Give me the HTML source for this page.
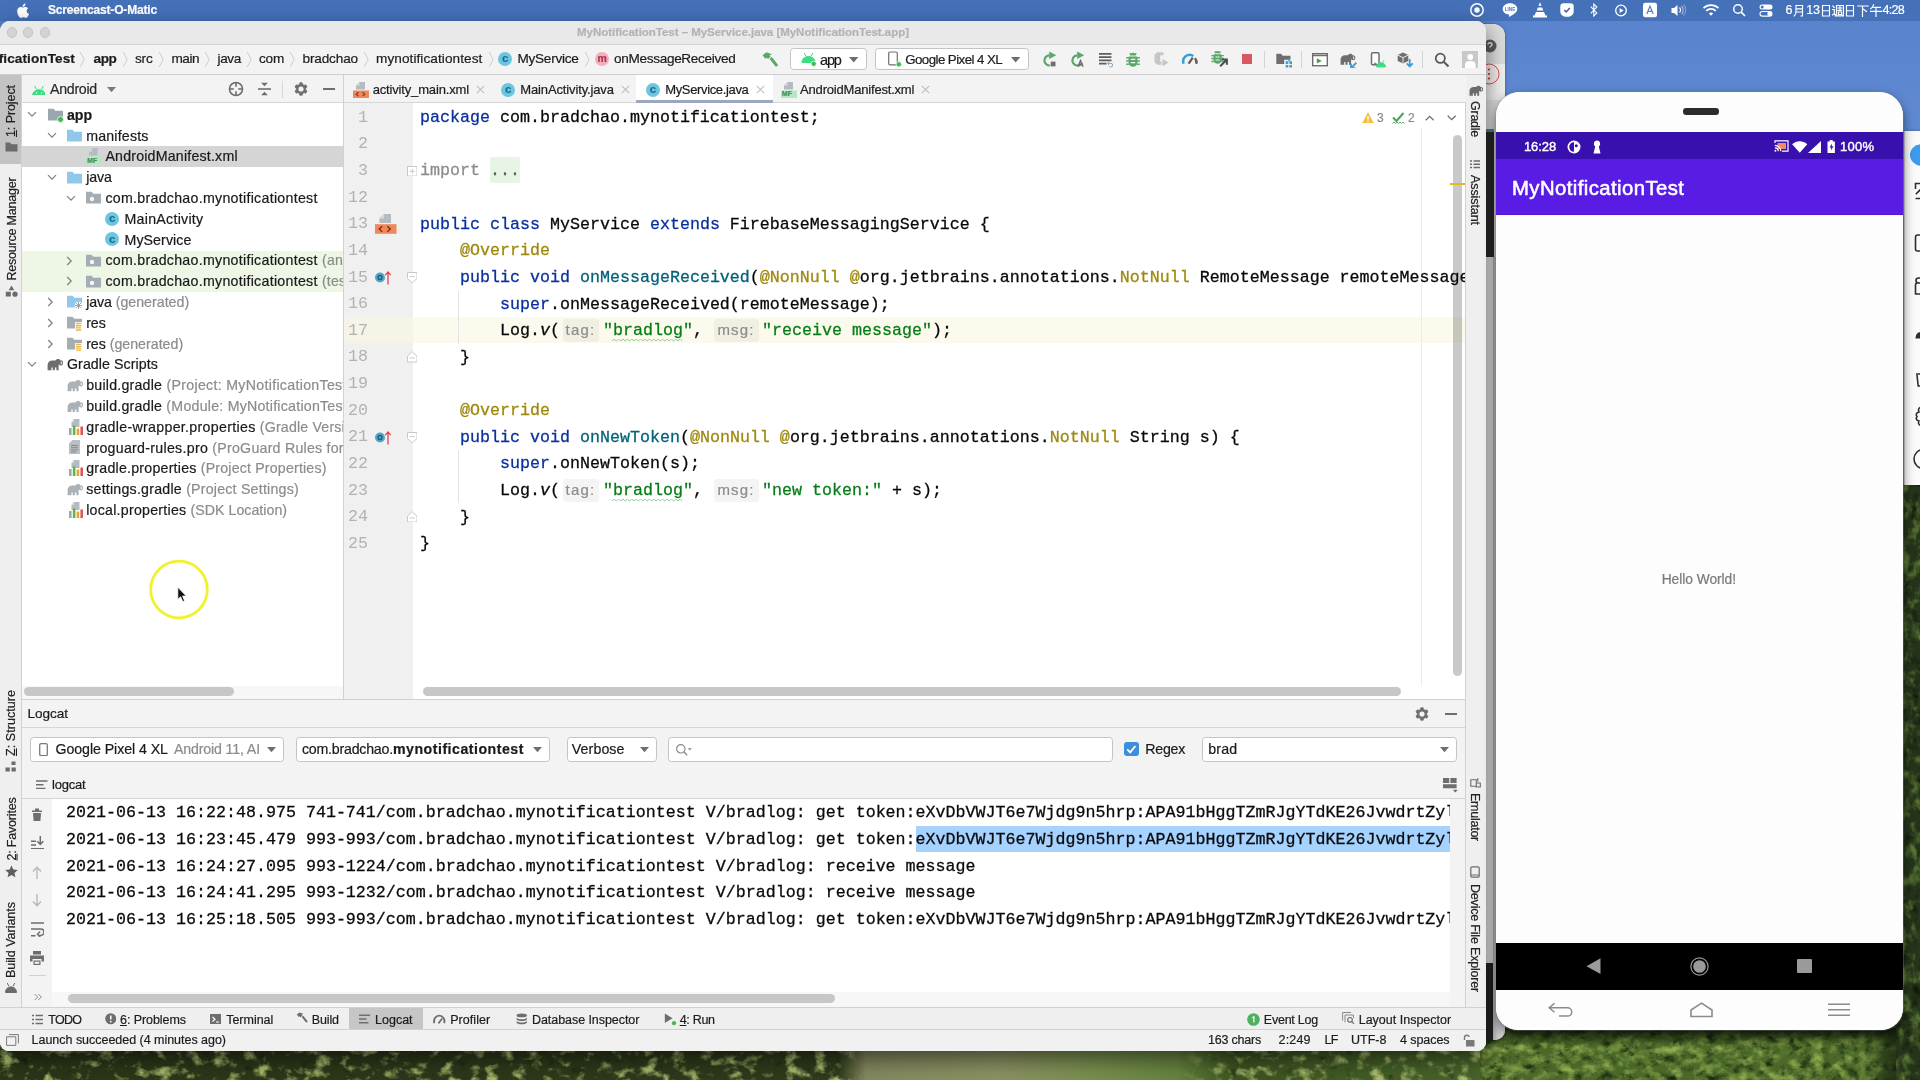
<!DOCTYPE html>
<html><head><meta charset="utf-8"><title>MyNotificationTest</title><style>
html,body{margin:0;padding:0}
body{width:1920px;height:1080px;overflow:hidden;position:relative;background:#5f8ad2;font-family:"Liberation Sans",sans-serif}
div,span,svg{position:absolute;box-sizing:border-box}
.t{white-space:pre;line-height:20px;height:20px}
.s{font-family:"Liberation Sans",sans-serif;-webkit-text-stroke:.2px currentColor}
.m{font-family:"Liberation Mono",monospace;-webkit-text-stroke:.27px currentColor}
.m span{-webkit-text-stroke:.27px currentColor}
#root{left:0;top:0;width:1920px;height:1080px;overflow:hidden;will-change:transform}
</style></head><body>
<div id="root">
<div style="left:0px;top:0px;width:1920px;height:1080px;background:linear-gradient(180deg,#5883cc 0px,#5f8ad2 120px,#668fd4 480px);"></div>
<svg style="left:0;top:0" width="1920" height="1080" viewBox="0 0 1920 1080">
<defs>
<filter id="fol" x="0" y="0" width="100%" height="100%" color-interpolation-filters="sRGB">
<feTurbulence type="fractalNoise" baseFrequency="0.085 0.11" numOctaves="5" seed="11" result="n"/>
<feColorMatrix in="n" type="matrix" values="0 0 0 0 0  0 0 0 0 0  0 0 0 0 0  1.7 1.7 0 0 -1.55" result="a"/>
<feFlood flood-color="#8fad50" result="c"/>
<feComposite in="c" in2="a" operator="in" result="hi"/>
<feColorMatrix in="n" type="matrix" values="0 0 0 0 0  0 0 0 0 0  0 0 0 0 0  0 -2 -2 0 1.9" result="b"/>
<feFlood flood-color="#18260e" result="d"/>
<feComposite in="d" in2="b" operator="in" result="lo"/>
<feMerge><feMergeNode in="SourceGraphic"/><feMergeNode in="lo"/><feMergeNode in="hi"/></feMerge>
</filter>
<filter id="fol3" x="0" y="0" width="100%" height="100%" color-interpolation-filters="sRGB">
<feTurbulence type="fractalNoise" baseFrequency="0.09 0.07" numOctaves="4" seed="23" result="n"/>
<feColorMatrix in="n" type="matrix" values="0 0 0 0 0  0 0 0 0 0  0 0 0 0 0  2 2 0 0 -1.9" result="a"/>
<feFlood flood-color="#62823a" result="c"/>
<feComposite in="c" in2="a" operator="in" result="hi"/>
<feColorMatrix in="n" type="matrix" values="0 0 0 0 0  0 0 0 0 0  0 0 0 0 0  0 -2 -2 0 1.8" result="b"/>
<feFlood flood-color="#10190a" result="d"/>
<feComposite in="d" in2="b" operator="in" result="lo"/>
<feMerge><feMergeNode in="SourceGraphic"/><feMergeNode in="lo"/><feMergeNode in="hi"/></feMerge>
</filter>
<linearGradient id="shd" x1="0" x2="0" y1="0" y2="1"><stop offset="0" stop-color="#101a08" stop-opacity=".85"/><stop offset="1" stop-color="#101a08" stop-opacity="0"/></linearGradient>
<linearGradient id="shr" x1="0" x2="1" y1="0" y2="0"><stop offset="0" stop-color="#141f0c" stop-opacity="0"/><stop offset="1" stop-color="#141f0c" stop-opacity=".9"/></linearGradient>
<filter id="fol2" x="0" y="0" width="100%" height="100%" color-interpolation-filters="sRGB">
<feTurbulence type="fractalNoise" baseFrequency="0.07 0.09" numOctaves="4" seed="5" result="n"/>
<feColorMatrix in="n" type="matrix" values="0 0 0 0 0  0 0 0 0 0  0 0 0 0 0  2.4 2.4 0 0 -2.45" result="a"/>
<feFlood flood-color="#a9bb6c" result="c"/>
<feComposite in="c" in2="a" operator="in" result="hi"/>
<feColorMatrix in="n" type="matrix" values="0 0 0 0 0  0 0 0 0 0  0 0 0 0 0  0 -2 -2 0 1.5" result="b"/>
<feFlood flood-color="#151f0c" result="d"/>
<feComposite in="d" in2="b" operator="in" result="lo"/>
<feMerge><feMergeNode in="SourceGraphic"/><feMergeNode in="lo"/><feMergeNode in="hi"/></feMerge>
</filter>
<linearGradient id="bt" x1="0" x2="1" y1="0" y2="0">
<stop offset="0" stop-color="#2a3618"/><stop offset="0.6" stop-color="#2f3b1c"/><stop offset="0.8" stop-color="#3a5020"/><stop offset="1" stop-color="#48642a"/>
</linearGradient>
<linearGradient id="fld" x1="0" x2="1" y1="0" y2="0">
<stop offset="0" stop-color="#7d8359" stop-opacity="0"/><stop offset="0.07" stop-color="#85895f"/><stop offset="0.4" stop-color="#8b9263"/>
<stop offset="0.62" stop-color="#7a9050"/><stop offset="0.85" stop-color="#66843e"/><stop offset="1" stop-color="#5a7a35" stop-opacity="0"/>
</linearGradient>
</defs>
<rect x="0" y="1044" width="1486" height="36" fill="url(#bt)" filter="url(#fol2)"/>
<rect x="838" y="1044" width="400" height="36" fill="url(#fld)"/>
<rect x="1480" y="1020" width="440" height="60" fill="#4b6829" filter="url(#fol)"/>
<rect x="1480" y="1028" width="440" height="17" fill="url(#shd)"/>
<rect x="1862" y="1020" width="40" height="60" fill="url(#shr)"/>

<rect x="1896" y="484" width="24" height="596" fill="#25341a" filter="url(#fol3)"/>
</svg>
<div style="left:0px;top:0px;width:1920px;height:21px;background:#4571b9;"></div>
<svg style="left:16px;top:2px;" width="15" height="17" viewBox="0 0 15 17"><path fill="#fff" d="M10.6 8.9c0-1.7 1.4-2.5 1.5-2.6-.8-1.2-2.1-1.4-2.5-1.4-1.1-.1-2.1.6-2.6.6-.6 0-1.4-.6-2.3-.6C3.500 4.900 2.400 5.600 1.800 6.700.5 8.900 1.500 12.200 2.700 14c.6.9 1.300 1.900 2.300 1.800.9 0 1.300-.6 2.400-.6s1.400.6 2.400.6 1.600-.9 2.200-1.800c.7-1 1-2 1-2.100-.1 0-2.400-.9-2.400-3zM8.800 3.700c.5-.6.800-1.400.700-2.300-.7 0-1.600.5-2.100 1.100-.5.500-.9 1.400-.8 2.200.8.100 1.700-.4 2.200-1z"/></svg>
<span class="t s" style="left:48px;top:0.30px;font-size:12px;color:#fff;letter-spacing:-0.169px;font-weight:700;">Screencast-O-Matic</span>
<svg style="left:1468.2px;top:1.3000000000000007px;" width="18" height="18" viewBox="0 0 18 18"><circle cx="9" cy="9" r="6.2" fill="none" stroke="#fff" stroke-width="1.5"/><circle cx="9" cy="9" r="2.7" fill="#fff"/></svg>
<svg style="left:1500.8px;top:1.3000000000000007px;" width="18" height="18" viewBox="0 0 18 18"><path fill="#fff" d="M9 2.300c-4.100 0-7.300 2.500-7.300 5.700 0 2.800 2.500 5.100 5.900 5.600.5.100.6.300.5.800l-.1 1c0 .3.200.5.600.300 1.500-.8 5.300-3.100 6.600-4.700.7-.9 1.100-1.900 1.100-3 0-3.200-3.200-5.700-7.300-5.700z"/><text x="9" y="9.800" text-anchor="middle" font-family="Liberation Sans" font-weight="700" font-size="4.600" fill="#4c76bd">LINE</text></svg>
<svg style="left:1531.3px;top:1.3000000000000007px;" width="18" height="18" viewBox="0 0 18 18"><path fill="#fff" d="M9 1.200l1.500 3.600h-3zM6.900 6.400h4.200l1.200 3h-6.600zM5 11h8l1.500 3.500h1.500v2h-14v-2h1.500z"/></svg>
<svg style="left:1558.3px;top:1.3000000000000007px;" width="18" height="18" viewBox="0 0 18 18"><path fill="#fff" d="M5.500 2.300h7c2 0 3.200 1.200 3.200 3.200v5c0 3-2.500 5.300-6.700 5.300s-6.700-2.300-6.700-5.300v-5c0-2 1.200-3.200 3.200-3.200z"/><path d="M6.300 9l1.900 1.900 3.600-3.800" stroke="#3c5f9e" stroke-width="1.500" fill="none"/></svg>
<svg style="left:1584.7px;top:1.3000000000000007px;" width="18" height="18" viewBox="0 0 18 18"><path fill="none" stroke="#fff" stroke-width="1.100" d="M5.800 5.600l6 6.300-3 3v-11.800l3 3-6 6.300"/></svg>
<svg style="left:1611.5px;top:1.3000000000000007px;" width="18" height="18" viewBox="0 0 18 18"><circle cx="9" cy="9.500" r="5.300" fill="none" stroke="#fff" stroke-width="1.300"/><path fill="#fff" d="M7.600 7l4 2.500-4 2.500z"/></svg>
<svg style="left:1641.0px;top:1.3000000000000007px;" width="18" height="18" viewBox="0 0 18 18"><rect x="2" y="1.800" width="14" height="14.400" rx="2.200" fill="#fff"/><path d="M5.800 13l3.200-8 3.200 8M6.900 10.300h4.200" stroke="#5f7fb8" stroke-width="1.200" fill="none"/></svg>
<svg style="left:1670.4px;top:1.3000000000000007px;" width="20" height="18" viewBox="0 0 20 18"><path fill="#fff" d="M1.500 7h2.500l3.500-3v11l-3.500-3h-2.500z"/><path d="M9.500 6.500c1.300 1.300 1.300 3.700 0 5" stroke="#fff" stroke-width="1.100" fill="none"/><path d="M11.500 4.800c2.200 2.200 2.200 6.200 0 8.400" stroke="#fff" stroke-width="1.100" fill="none" opacity=".55"/><path d="M13.500 3.300c3 3 3 8.400 0 11.400" stroke="#fff" stroke-width="1.100" fill="none" opacity=".35"/></svg>
<svg style="left:1701.8px;top:1.3000000000000007px;" width="18" height="18" viewBox="0 0 18 18"><path d="M1.500 7.200c4.200-4 10.800-4 15 0" stroke="#fff" stroke-width="1.700" fill="none"/><path d="M4.200 9.900c2.700-2.600 6.900-2.600 9.600 0" stroke="#fff" stroke-width="1.700" fill="none"/><path d="M6.800 12.400c1.300-1.200 3.100-1.200 4.400 0l-2.200 2.300z" fill="#fff"/></svg>
<svg style="left:1729.6px;top:1.3000000000000007px;" width="18" height="18" viewBox="0 0 18 18"><circle cx="8" cy="8" r="4.300" fill="none" stroke="#fff" stroke-width="1.500"/><path d="M11.200 11.200l3.800 3.800" stroke="#fff" stroke-width="1.700"/></svg>
<svg style="left:1757.0px;top:1.3000000000000007px;" width="18" height="18" viewBox="0 0 18 18"><rect x="2.500" y="3.500" width="13" height="5" rx="2.500" fill="#fff"/><circle cx="5.200" cy="6" r="1.500" fill="#4571b9"/><rect x="3" y="10.500" width="12" height="4.600" rx="2.300" fill="none" stroke="#fff" stroke-width="1.100"/><circle cx="12.600" cy="12.800" r="2.300" fill="#fff"/></svg>
<span class="t s" style="left:1785.6px;top:0.40px;font-size:12.5px;color:#fff;">6</span>
<svg style="left:1792.6px;top:3.6px;" width="12" height="13" viewBox="0 0 12 13"><path stroke="#fff" stroke-width="1.150" fill="none" stroke-linecap="square" d="M3 1.500h6.500v10.500h-1.500M3 1.500v6c0 2-.5 3.500-1.800 4.500M3 4.800h6.500M3 8h6.500"/></svg>
<span class="t s" style="left:1806.3px;top:0.40px;font-size:12.5px;color:#fff;letter-spacing:-0.202px;">13</span>
<svg style="left:1819.6px;top:3.6px;" width="12" height="13" viewBox="0 0 12 13"><path stroke="#fff" stroke-width="1.150" fill="none" stroke-linecap="square" d="M2.500 1.500h7v10.500h-7zM2.500 6.700h7"/></svg>
<svg style="left:1832.4px;top:3.6px;" width="12" height="13" viewBox="0 0 12 13"><path stroke="#fff" stroke-width="1.150" fill="none" stroke-linecap="square" d="M4.500 1.500h7v10h-1.500M4.500 1.500v7c0 1.500-.3 2.500-1 3.500M6 4h4M8 2.500v4M6 6.300h4M6.300 8h3.400v2.500h-3.400zM.800 2l1.500 1.500M.500 5.500h1.800v4l-1.800 1.500M2 10l2 1.800h7.800"/></svg>
<svg style="left:1844px;top:3.6px;" width="12" height="13" viewBox="0 0 12 13"><path stroke="#fff" stroke-width="1.150" fill="none" stroke-linecap="square" d="M2.500 1.500h7v10.500h-7zM2.500 6.700h7"/></svg>
<svg style="left:1857.4px;top:3.6px;" width="12" height="13" viewBox="0 0 12 13"><path stroke="#fff" stroke-width="1.150" fill="none" stroke-linecap="square" d="M.800 2h10.400M5.500 2v10.300M6 5l3.500 2.500"/></svg>
<svg style="left:1869.6px;top:3.6px;" width="12" height="13" viewBox="0 0 12 13"><path stroke="#fff" stroke-width="1.150" fill="none" stroke-linecap="square" d="M3.500.800c-.5 1.800-1.500 3-2.800 4M2.800 3.300h7.700M.500 7.300h11M6 3.300v9"/></svg>
<span class="t s" style="left:1882.4px;top:0.40px;font-size:12.5px;color:#fff;letter-spacing:-0.632px;">4:28</span>
<div style="left:1440px;top:24px;width:65px;height:1016px;background:#e3e3e3;overflow:hidden;border-radius:0 12px 10px 0;box-shadow:0 0 3px rgba(0,0,0,.35);">
<div style="left:0px;top:0px;width:65px;height:40px;background:#dcdcdc;"></div>
<div style="left:0px;top:40px;width:65px;height:36px;background:#f1f1f1;"></div>
<div style="left:46px;top:108px;width:7.5px;height:125px;background:#2a2a2c;"></div>
<div style="left:46px;top:105px;width:7.5px;height:3px;background:#4a8a96;"></div>
<div style="left:46px;top:939px;width:6.5px;height:77px;background:#242424;"></div>
<div style="left:53px;top:233px;width:12px;height:783px;background:linear-gradient(90deg,#bdbdbd,#d8d8d8 40%,#e6e6e6);"></div>
<svg style="left:40px;top:12px;" width="20" height="20" viewBox="0 0 20 20"><circle cx="10" cy="10" r="6.500" fill="#5a5a5a"/><path d="M8 8.500c0-2.500 4-2.500 4 0 0 1.500-2 1.500-2 3" stroke="#e0e0e0" stroke-width="1.500" fill="none"/></svg>
<svg style="left:34px;top:36px;" width="30" height="30" viewBox="0 0 30 30"><circle cx="15" cy="14" r="10" fill="#f6eded" stroke="#d9534f" stroke-width="1"/><circle cx="15" cy="9.500" r="1.100" fill="#c0392b"/><circle cx="15" cy="14" r="1.100" fill="#c0392b"/><circle cx="15" cy="18.500" r="1.100" fill="#c0392b"/></svg>
</div>
<div style="left:0px;top:21px;width:1486px;height:1030px;background:#ececec;border-radius:10px 10px 9px 9px;box-shadow:0 8px 22px rgba(0,0,0,.55);"></div>
<div style="left:0px;top:21px;width:1486px;height:1030px;background:#f2f2f2;overflow:hidden;border-radius:10px 10px 9px 9px;">
<div style="left:0px;top:0px;width:1486px;height:23.5px;background:#e9e9e9;"></div>
<div style="left:0px;top:23px;width:1486px;height:1px;background:#d2d2d2;"></div>
<div style="left:6.499999999999999px;top:6.199999999999999px;width:10.4px;height:10.4px;background:#d3d3d3;border-radius:50%;border:.5px solid #c4c4c4;"></div>
<div style="left:23.0px;top:6.199999999999999px;width:10.4px;height:10.4px;background:#d3d3d3;border-radius:50%;border:.5px solid #c4c4c4;"></div>
<div style="left:39.8px;top:6.199999999999999px;width:10.4px;height:10.4px;background:#d3d3d3;border-radius:50%;border:.5px solid #c4c4c4;"></div>
<span class="t s" style="left:577px;top:1.20px;font-size:11.5px;color:#b3b3b3;letter-spacing:-0.030px;font-weight:700;">MyNotificationTest – MyService.java [MyNotificationTest.app]</span>
<div style="left:0px;top:24px;width:1486px;height:29.5px;background:#f3f3f3;"></div>
<div style="left:0px;top:53px;width:1486px;height:1px;background:#cfcfcf;"></div>
<span class="t s" style="left:-47px;top:28.20px;font-size:13.6px;color:#1c1c1c;letter-spacing:0.075px;font-weight:700;">MyNotificationTest</span>
<span class="t s" style="left:93.5px;top:28.20px;font-size:13.6px;color:#1c1c1c;letter-spacing:-0.393px;font-weight:700;">app</span>
<span class="t s" style="left:135px;top:28.20px;font-size:13.6px;color:#1c1c1c;letter-spacing:-0.210px;">src</span>
<span class="t s" style="left:171.5px;top:28.20px;font-size:13.6px;color:#1c1c1c;letter-spacing:-0.495px;">main</span>
<span class="t s" style="left:217.5px;top:28.20px;font-size:13.6px;color:#1c1c1c;letter-spacing:-0.362px;">java</span>
<span class="t s" style="left:259px;top:28.20px;font-size:13.6px;color:#1c1c1c;letter-spacing:-0.231px;">com</span>
<span class="t s" style="left:302.5px;top:28.20px;font-size:13.6px;color:#1c1c1c;letter-spacing:-0.152px;">bradchao</span>
<span class="t s" style="left:376px;top:28.20px;font-size:13.6px;color:#1c1c1c;letter-spacing:0.079px;">mynotificationtest</span>
<span class="t s" style="left:517.5px;top:28.20px;font-size:13.6px;color:#1c1c1c;letter-spacing:-0.276px;">MyService</span>
<span class="t s" style="left:614px;top:28.20px;font-size:13.6px;color:#1c1c1c;letter-spacing:-0.324px;">onMessageReceived</span>
<svg style="left:79.0px;top:29.700000000000003px;" width="7" height="17" viewBox="0 0 7 17"><path d="M1.200 1l4 7.500-4 7.500" stroke="#cdcdcd" stroke-width="1" fill="none"/></svg>
<svg style="left:121.5px;top:29.700000000000003px;" width="7" height="17" viewBox="0 0 7 17"><path d="M1.200 1l4 7.500-4 7.500" stroke="#cdcdcd" stroke-width="1" fill="none"/></svg>
<svg style="left:158.0px;top:29.700000000000003px;" width="7" height="17" viewBox="0 0 7 17"><path d="M1.200 1l4 7.500-4 7.500" stroke="#cdcdcd" stroke-width="1" fill="none"/></svg>
<svg style="left:204.0px;top:29.700000000000003px;" width="7" height="17" viewBox="0 0 7 17"><path d="M1.200 1l4 7.500-4 7.500" stroke="#cdcdcd" stroke-width="1" fill="none"/></svg>
<svg style="left:245.5px;top:29.700000000000003px;" width="7" height="17" viewBox="0 0 7 17"><path d="M1.200 1l4 7.500-4 7.500" stroke="#cdcdcd" stroke-width="1" fill="none"/></svg>
<svg style="left:289.0px;top:29.700000000000003px;" width="7" height="17" viewBox="0 0 7 17"><path d="M1.200 1l4 7.500-4 7.500" stroke="#cdcdcd" stroke-width="1" fill="none"/></svg>
<svg style="left:363.0px;top:29.700000000000003px;" width="7" height="17" viewBox="0 0 7 17"><path d="M1.200 1l4 7.500-4 7.500" stroke="#cdcdcd" stroke-width="1" fill="none"/></svg>
<svg style="left:487.5px;top:29.700000000000003px;" width="7" height="17" viewBox="0 0 7 17"><path d="M1.200 1l4 7.500-4 7.500" stroke="#cdcdcd" stroke-width="1" fill="none"/></svg>
<svg style="left:584.0px;top:29.700000000000003px;" width="7" height="17" viewBox="0 0 7 17"><path d="M1.200 1l4 7.500-4 7.500" stroke="#cdcdcd" stroke-width="1" fill="none"/></svg>
<div style="left:498.10px;top:31.00px;width:14.4px;height:14.4px;border-radius:50%;background:#6cc6e2;"></div>
<span class="t s" style="left:498.10px;top:27.30px;width:14.4px;text-align:center;font-size:11.5px;font-weight:700;color:#1f6f8f;">c</span>
<div style="left:595.10px;top:31.00px;width:14.4px;height:14.4px;border-radius:50%;background:#f6afba;"></div>
<span class="t s" style="left:595.10px;top:27.30px;width:14.4px;text-align:center;font-size:10.5px;font-weight:700;color:#a13a4e;">m</span>
<svg style="left:759.5px;top:29.5px;" width="18.5" height="17.5" viewBox="0 0 16 14"><path fill="#59a869" d="M2.200 3.200l3.400-2.600 4.600 1.600-2 1.100 1 1.200-2.300 1.900-1-1.200-1.300 1zM8.300 6.300l1.900-1.600 5.200 6.500c.5.700-1.200 2.200-1.900 1.600z"/></svg>
<div style="left:789.6px;top:27px;width:77.7px;height:22px;background:#ffffff;border:1px solid #c4c4c4;border-radius:3.500px;"></div>
<svg style="left:800.5px;top:31px;" width="16" height="15" viewBox="0 0 16 15"><path d="M1 10.500c0-3.600 2.700-6 6.500-6s6.500 2.400 6.500 6zM3.200 1l1.700 3M11.800 1l-1.700 3" fill="#3ddc84" stroke="#3ddc84" stroke-width="1"/><circle cx="12.700" cy="11.800" r="2.600" fill="#3fb950" stroke="#fff" stroke-width=".8"/></svg>
<span class="t s" style="left:820px;top:28.80px;font-size:14.5px;color:#1c1c1c;letter-spacing:-1.131px;">app</span>
<svg style="left:848.5px;top:35.5px;" width="10" height="6" viewBox="0 0 10 6"><path d="M0 0h9.400l-4.700 5.400z" fill="#6e6e6e"/></svg>
<div style="left:874.6px;top:27px;width:154.7px;height:22px;background:#ffffff;border:1px solid #c4c4c4;border-radius:3.500px;"></div>
<svg style="left:886.5px;top:30px;" width="16" height="17" viewBox="0 0 16 17"><rect x="1.700" y="1" width="8.600" height="12.800" rx="1.300" stroke="#6e6e6e" stroke-width="1.200" fill="#fff"/><circle cx="11.800" cy="13.300" r="2.700" fill="#3fb950" stroke="#fff" stroke-width=".8"/></svg>
<span class="t s" style="left:905.2px;top:28.80px;font-size:13.3px;color:#1c1c1c;letter-spacing:-0.557px;">Google Pixel 4 XL</span>
<svg style="left:1010.8px;top:35.5px;" width="10" height="6" viewBox="0 0 10 6"><path d="M0 0h9.400l-4.700 5.400z" fill="#6e6e6e"/></svg>
<svg style="left:1039.8px;top:28.700000000000003px;" width="18" height="18" viewBox="0 0 18 18"><path d="M9.300 5.300a5.100 5.100 0 1 0 4.700 7.600" stroke="#59a869" stroke-width="2.200" fill="none"/><path d="M9.200 1.500l7 3.800-7 3.800z" fill="#59a869"/><rect x="10.300" y="11.200" width="5.600" height="5.600" fill="#6e6e6e" stroke="#f3f3f3" stroke-width=".7"/></svg>
<svg style="left:1067.6px;top:28.700000000000003px;" width="18" height="18" viewBox="0 0 18 18"><path d="M9.300 5.300a5.100 5.100 0 1 0 4.700 7.600" stroke="#59a869" stroke-width="2.200" fill="none"/><path d="M9.200 1.500l7 3.800-7 3.800z" fill="#59a869"/><path d="M9.800 16.800l2.700-6.300 2.700 6.300M10.800 14.800h3.400" stroke="#6e6e6e" stroke-width="1.300" fill="none"/></svg>
<svg style="left:1096.7px;top:28.700000000000003px;" width="18" height="18" viewBox="0 0 18 18"><path d="M2 3.800h12.500M2 7.100h12.500M2 10.400h12.500M2 13.700h7.500" stroke="#5e5e5e" stroke-width="1.800"/><path d="M12 11.800l-1.500 1.600 1.500 1.600M10.700 13.400h3.300a1.700 1.700 0 0 1 0 3.400h-1.500" stroke="#8aa0b3" stroke-width="1" fill="none"/></svg>
<svg style="left:1123.7px;top:28.700000000000003px;" width="18" height="18" viewBox="0 0 18 18"><g transform="translate(9 10) scale(1.0)"><path d="M-2.600-4.600a2.600 2.600 0 0 1 5.200 0z" fill="#59a869"/><path d="M-3.600-3.600h7.200c.6 0 .9.400.9 1v5.200c0 2.600-2 4.200-4.500 4.200s-4.500-1.600-4.500-4.200v-5.200c0-.6.300-1 .9-1z" fill="#59a869"/><path d="M-3.200-6.800l1.500 1.900M3.200-6.800l-1.500 1.900M-6.800-2.200h2.600M-6.800 1h2.600M-6.800 4.200h2.600M6.800-2.200h-2.600M6.800 1h-2.600M6.800 4.200h-2.600" stroke="#59a869" stroke-width="1.500"/><path d="M-2.200-.6h4.400M-2.200 2.600h4.400" stroke="#f3f3f3" stroke-width="1.100"/></g></svg>
<svg style="left:1152.2px;top:28.700000000000003px;" width="18" height="18" viewBox="0 0 18 18"><path d="M5.200 2.200h6.300v3h-3.300v6.600h3.300v3h-6.300l-2.700-2.500v-7.600z" fill="#c6c6c6"/><path d="M10 8.200l7.300 4.400-7.300 4.400z" fill="#c6c6c6" stroke="#f3f3f3" stroke-width=".9"/></svg>
<svg style="left:1180.6px;top:28.700000000000003px;" width="18" height="18" viewBox="0 0 18 18"><path fill="none" stroke="#389fd6" stroke-width="2.500" d="M2.700 13.800a6.400 6.400 0 0 1 9.600-7.700"/><path fill="none" stroke="#5e5e5e" stroke-width="2.500" d="M14 8.300a6.400 6.400 0 0 1 1.300 5.500"/><path d="M7.600 13.600l4.200-6" stroke="#5e5e5e" stroke-width="2.300"/></svg>
<svg style="left:1209.9px;top:28.200000000000003px;" width="19" height="19" viewBox="0 0 19 19"><g transform="translate(7.6 8.6) scale(0.92)"><path d="M-2.600-4.600a2.600 2.600 0 0 1 5.200 0z" fill="#59a869"/><path d="M-3.600-3.600h7.200c.6 0 .9.400.9 1v5.200c0 2.600-2 4.200-4.500 4.200s-4.500-1.600-4.500-4.200v-5.200c0-.6.300-1 .9-1z" fill="#59a869"/><path d="M-3.200-6.800l1.500 1.900M3.200-6.800l-1.500 1.900M-6.800-2.200h2.600M-6.800 1h2.600M-6.800 4.200h2.600M6.800-2.200h-2.600M6.800 1h-2.600M6.800 4.200h-2.600" stroke="#59a869" stroke-width="1.500"/><path d="M-2.200-.6h4.400M-2.200 2.600h4.400" stroke="#f3f3f3" stroke-width="1.100"/></g><path d="M10.200 17.300l6-6M11.700 10.600h5.200v5.200" stroke="#4d4d4d" stroke-width="2" fill="none"/></svg>
<div style="left:1241.5px;top:32.8px;width:10.7px;height:10.2px;background:#db5860;"></div>
<div style="left:1264.2px;top:30px;width:1px;height:17px;background:#d3d3d3;"></div>
<svg style="left:1275.5px;top:30.5px;" width="17" height="16" viewBox="0 0 17 16"><path d="M.3 1.800h4.700l1.700 2h7.800v4h-6.300v4.200h-7.900z" fill="#6e6e6e"/><path d="M9.700 9.300h2.600v2.600h-2.600zM13.400 9.300h2.600v2.600h-2.600zM9.700 13h2.600v2.600h-2.600zM13.400 13h2.600v2.600h-2.600z" fill="#389fd6"/><path d="M12.300 6.500h1.500v3h-1.500z" fill="#389fd6"/></svg>
<div style="left:1301px;top:30px;width:1px;height:17px;background:#d3d3d3;"></div>
<svg style="left:1312px;top:32px;" width="16" height="13.5" viewBox="0 0 16 13.5"><rect x=".7" y=".7" width="14.600" height="12" fill="#fff" stroke="#6e6e6e" stroke-width="1.400"/><path d="M.7 2.500h14.600" stroke="#6e6e6e" stroke-width="1.600"/><path d="M4.800 5.200l5 2.700-5 2.700z" fill="#499c54"/></svg>
<svg style="left:1340px;top:31.5px;" width="18" height="15.5" viewBox="0 0 16.500 14.200"><g transform="scale(.875 1)"><path fill="#6e6e6e" d="M.6 10.800V6.200C.6 3.500 2.600 2.100 5.400 2.100H8.300C9.100 1 10.500.5 11.900.9c1.500.5 2.200 1.900 1.900 3.300l-.4 1.700h-1.800v4.900h-2.200v-2.500h-1.500v2.500h-2.200v-2.500h-1.300v2.500z"/><path d="M12.600 5.300c.9 1.300 2.900.7 2.900-1 0-1.300-1.100-2-1.900-1.500" stroke="#6e6e6e" stroke-width="1.150" fill="none"/></g><path d="M13.200 7.300l-4.600 4.700M8.300 8.200v4.200h4.200" stroke="#389fd6" stroke-width="1.700" fill="none" transform="translate(1.800,1.600)"/></svg>
<svg style="left:1369.5px;top:31px;" width="16" height="16" viewBox="0 0 16 16"><rect x="1.500" y=".8" width="7.500" height="12" rx="1.200" stroke="#6e6e6e" stroke-width="1.500" fill="#fff"/><path d="M4 11.300h2.500" stroke="#6e6e6e" stroke-width="1"/><path d="M6.500 15c0-2.700 1.900-4.300 4.500-4.300s4.500 1.600 4.500 4.300zM8 8.300l1.300 2.200M14 8.300l-1.300 2.200" fill="#3ddc84" stroke="#3ddc84" stroke-width=".9"/></svg>
<svg style="left:1396.5px;top:31px;" width="17" height="16" viewBox="0 0 17 16"><path d="M6 .6l5.300 2.500v5.800l-5.300 2.600-5.300-2.600v-5.800z" fill="#6e6e6e"/><path d="M.7 3.100l5.300 2.500 5.300-2.500M6 5.600v5.900" stroke="#f3f3f3" stroke-width=".9" fill="none"/><path d="M12.700 7v7M9.700 11.300l3 3.200 3-3.200" stroke="#389fd6" stroke-width="1.800" fill="none"/></svg>
<div style="left:1422px;top:30px;width:1px;height:17px;background:#d3d3d3;"></div>
<svg style="left:1434px;top:31px;" width="16" height="16" viewBox="0 0 16 16"><circle cx="6.300" cy="6.300" r="4.600" stroke="#595959" stroke-width="1.800" fill="none"/><path d="M9.700 9.700l4.800 4.800" stroke="#595959" stroke-width="2.100"/></svg>
<svg style="left:1461.7px;top:30px;" width="16.5" height="17" viewBox="0 0 16.5 17"><rect width="16.500" height="17" fill="#c8c8c8"/><circle cx="8.250" cy="6" r="2.900" fill="#fff"/><path d="M3 17v-3.800c0-2.200 2-3.200 5.250-3.200s5.250 1 5.250 3.200v3.800z" fill="#fff"/></svg>
<div style="left:0px;top:54px;width:21px;height:932px;background:#efefef;"></div>
<div style="left:21px;top:54px;width:1px;height:932px;background:#d1d1d1;"></div>
<div style="left:0px;top:54px;width:21px;height:89px;background:#c3c3c3;"></div>
<span class="t s" style="left:-14.80px;top:80.00px;width:52.00px;font-size:12.5px;color:#222;letter-spacing:-0.080px;transform:rotate(-90deg);transform-origin:50% 50%;"><u>1</u>: Project</span>
<svg style="left:4.5px;top:119.5px;" width="13" height="11" viewBox="0 0 13 11"><path d="M.5 1.500h4.500l1.500 1.800h6v7.200h-12z" fill="#6b6b6b"/></svg>
<span class="t s" style="left:-40.30px;top:197.50px;width:103.00px;font-size:12.5px;color:#222;letter-spacing:-0.207px;transform:rotate(-90deg);transform-origin:50% 50%;">Resource Manager</span>
<svg style="left:4.5px;top:264px;" width="13" height="12" viewBox="0 0 13 12"><path d="M6.500.5l2.800 4.800h-5.600zM.8 6.800h5v4.700h-5z" fill="#6b6b6b"/><circle cx="10" cy="9.200" r="2.600" fill="#6b6b6b"/></svg>
<span class="t s" style="left:-21.80px;top:692.00px;width:66.00px;font-size:12.5px;color:#222;letter-spacing:0.059px;transform:rotate(-90deg);transform-origin:50% 50%;"><u>Z</u>: Structure</span>
<svg style="left:5px;top:739.5px;" width="12" height="11" viewBox="0 0 12 11"><path d="M6.500.5h4v3.600h-4zM.5 6.500h4.300v4h-4.300zM6.500 6.500h4.300v4h-4.300z" fill="#6b6b6b"/></svg>
<span class="t s" style="left:-20.30px;top:797.50px;width:63.00px;font-size:12.5px;color:#222;letter-spacing:-0.192px;transform:rotate(-90deg);transform-origin:50% 50%;"><u>2</u>: Favorites</span>
<svg style="left:4.5px;top:843.5px;" width="13" height="13" viewBox="0 0 13 13"><path d="M6.500.5l1.850 4.100 4.400.45-3.300 2.950.95 4.300-3.900-2.250-3.900 2.250.95-4.300-3.300-2.950 4.400-.45z" fill="#5e5e5e"/></svg>
<span class="t s" style="left:-26.80px;top:909.00px;width:76.00px;font-size:12.5px;color:#222;letter-spacing:-0.014px;transform:rotate(-90deg);transform-origin:50% 50%;">Build Variants</span>
<svg style="left:5px;top:961px;" width="12" height="11" viewBox="0 0 12 11"><path d="M.5 10.500c0-3.500 2.300-5.600 5.500-5.600s5.500 2.100 5.500 5.600zM2.200 1l1.700 3.200M9.800 1l-1.700 3.200" fill="#6b6b6b" stroke="#6b6b6b" stroke-width="1"/></svg>
<div style="left:1465.5px;top:54px;width:20.5px;height:932px;background:#efefef;"></div>
<div style="left:1465px;top:54px;width:1px;height:932px;background:#d1d1d1;"></div>
<svg style="left:1468.5px;top:63.5px;" width="14" height="11" viewBox="0 0 14 11"><g transform="scale(.875 1)"><path fill="#6b6b6b" d="M.6 10.800V6.200C.6 3.500 2.600 2.100 5.400 2.100H8.300C9.100 1 10.500.5 11.900.9c1.500.5 2.200 1.900 1.900 3.300l-.4 1.700h-1.800v4.900h-2.200v-2.500h-1.500v2.500h-2.200v-2.500h-1.300v2.500z"/><path d="M12.600 5.300c.9 1.300 2.900.7 2.900-1 0-1.300-1.100-2-1.900-1.500" stroke="#6b6b6b" stroke-width="1.150" fill="none"/></g></svg>
<span class="t s" style="left:1456.80px;top:88.00px;width:36.00px;font-size:12.5px;color:#222;letter-spacing:-0.253px;transform:rotate(90deg);transform-origin:50% 50%;">Gradle</span>
<svg style="left:1469.5px;top:138.5px;" width="10" height="9" viewBox="0 0 10 9"><path d="M0 1h2M3.500 1h6.500M0 4.300h2M3.500 4.300h6.500M0 7.600h2M3.500 7.600h6.500" stroke="#6b6b6b" stroke-width="1.500"/></svg>
<span class="t s" style="left:1449.80px;top:169.00px;width:50.00px;font-size:12.5px;color:#222;letter-spacing:-0.079px;transform:rotate(90deg);transform-origin:50% 50%;">Assistant</span>
<svg style="left:1469.5px;top:755.5px;" width="11" height="11" viewBox="0 0 11 11"><path d="M.8 2.800h5.500v6.400h-5.500zM7.800 1v3.500M6.300 6h4v4h-4z" stroke="#6b6b6b" stroke-width="1.100" fill="none"/></svg>
<span class="t s" style="left:1450.80px;top:785.50px;width:48.00px;font-size:12.5px;color:#222;letter-spacing:-0.253px;transform:rotate(90deg);transform-origin:50% 50%;">Emulator</span>
<svg style="left:1470px;top:845px;" width="10" height="12" viewBox="0 0 10 12"><rect x=".8" y=".8" width="8.400" height="10.400" rx="1.300" stroke="#6b6b6b" stroke-width="1.200" fill="none"/><path d="M1 9h8" stroke="#6b6b6b" stroke-width="1"/></svg>
<span class="t s" style="left:1420.80px;top:906.50px;width:108.00px;font-size:12.5px;color:#222;letter-spacing:-0.192px;transform:rotate(90deg);transform-origin:50% 50%;">Device File Explorer</span>
<div style="left:0px;top:986px;width:1486px;height:1px;background:#d1d1d1;"></div>
<div style="left:0px;top:987px;width:1486px;height:20.5px;background:#efefef;"></div>
<div style="left:348.8px;top:987px;width:73.8px;height:20.5px;background:#c6c6c6;"></div>
<svg style="left:32px;top:992.5px;" width="11" height="11" viewBox="0 0 11 11"><path d="M0 1.500h2M3.500 1.500h7.500M0 5.500h2M3.500 5.500h7.500M0 9.500h2M3.500 9.500h7.500" stroke="#6e6e6e" stroke-width="1.500"/></svg>
<span class="t s" style="left:48.2px;top:988.60px;font-size:12.5px;color:#1c1c1c;letter-spacing:-0.721px;">TODO</span>
<svg style="left:104.5px;top:992px;" width="11.5" height="11.5" viewBox="0 0 11.5 11.5"><circle cx="5.750" cy="5.750" r="5.500" fill="#6e6e6e"/><path d="M5.750 2.500v4" stroke="#fff" stroke-width="1.500"/><circle cx="5.750" cy="8.600" r=".9" fill="#fff"/></svg>
<span class="t s" style="left:120px;top:988.60px;font-size:12.5px;color:#1c1c1c;letter-spacing:-0.063px;"><u>6</u>: Problems</span>
<svg style="left:209.8px;top:992.5px;" width="11.5" height="10.5" viewBox="0 0 11.5 10.5"><rect width="11.500" height="10.500" fill="#6e6e6e"/><path d="M2.500 3l2.500 2.200-2.500 2.300M6 8h3" stroke="#fff" stroke-width="1.200" fill="none"/></svg>
<span class="t s" style="left:226.2px;top:988.60px;font-size:12.5px;color:#1c1c1c;letter-spacing:-0.017px;">Terminal</span>
<svg style="left:295px;top:991px;" width="13" height="13" viewBox="0 0 16 16"><path fill="#6e6e6e" d="M2.200 3.200l3.400-2.600 4.600 1.600-2 1.100 1 1.200-2.300 1.900-1-1.200-1.300 1zM8.300 6.300l1.900-1.600 5.200 6.500c.5.700-1.200 2.200-1.900 1.600z"/></svg>
<span class="t s" style="left:311.8px;top:988.60px;font-size:12.5px;color:#1c1c1c;letter-spacing:-0.159px;">Build</span>
<svg style="left:358.8px;top:993px;" width="11.5" height="10" viewBox="0 0 11.5 10"><path d="M0 1.200h11.500M0 5h7.500M0 8.800h9.500" stroke="#6e6e6e" stroke-width="1.500"/></svg>
<span class="t s" style="left:375px;top:988.60px;font-size:12.5px;color:#1c1c1c;letter-spacing:0.011px;">Logcat</span>
<svg style="left:433px;top:992.5px;" width="12.5" height="10.5" viewBox="0 0 16 13"><path fill="none" stroke="#6e6e6e" stroke-width="2.400" d="M1.800 11.500c-1.800-5 1.800-9.600 6.200-9.600s8 4.600 6.200 9.600"/><path d="M7 11.800l4.800-6.300" stroke="#6e6e6e" stroke-width="2.200"/></svg>
<span class="t s" style="left:450.2px;top:988.60px;font-size:12.5px;color:#1c1c1c;letter-spacing:0.051px;">Profiler</span>
<svg style="left:515.5px;top:991.5px;" width="11.5" height="12" viewBox="0 0 11.5 12"><ellipse cx="5.750" cy="2.400" rx="5.200" ry="1.900" fill="#6e6e6e"/><path d="M.55 4.400c0 2.400 10.400 2.400 10.400 0v1.800c0 2.400-10.400 2.400-10.400 0zM.55 7.700c0 2.400 10.400 2.400 10.400 0v1.800c0 2.400-10.400 2.400-10.400 0z" fill="#6e6e6e"/></svg>
<span class="t s" style="left:532px;top:988.60px;font-size:12.5px;color:#1c1c1c;letter-spacing:-0.061px;">Database Inspector</span>
<svg style="left:664px;top:992px;" width="13" height="13" viewBox="0 0 13 13"><path d="M.8.500l7.800 4.800-7.800 4.800z" fill="#6e6e6e"/><circle cx="10" cy="10.200" r="2.100" fill="#3fb950"/></svg>
<span class="t s" style="left:679.7px;top:988.60px;font-size:12.5px;color:#1c1c1c;letter-spacing:-0.305px;"><u>4</u>: Run</span>
<svg style="left:1246.5px;top:991.7px;" width="13" height="13" viewBox="0 0 13 13"><circle cx="6.500" cy="6.500" r="6.300" fill="#4cb060"/><path d="M5.300 4.800l1.600-1v5.800" stroke="#fff" stroke-width="1.200" fill="none"/></svg>
<span class="t s" style="left:1263.8px;top:988.60px;font-size:12.5px;color:#1c1c1c;letter-spacing:-0.233px;">Event Log</span>
<svg style="left:1341.5px;top:991px;" width="13" height="12" viewBox="0 0 13 12"><path d="M.6 8.500v-8h8.500M3 10.500v-7.500h8.500v3" stroke="#8a8a8a" stroke-width="1" fill="none"/><circle cx="8" cy="7.800" r="2.300" stroke="#6e6e6e" stroke-width="1.100" fill="none"/><path d="M9.700 9.500l2.300 2.300" stroke="#6e6e6e" stroke-width="1.200"/></svg>
<span class="t s" style="left:1358.7px;top:988.60px;font-size:12.5px;color:#1c1c1c;letter-spacing:0.005px;">Layout Inspector</span>
<div style="left:0px;top:1007.5px;width:1486px;height:1px;background:#d1d1d1;"></div>
<div style="left:0px;top:1008.5px;width:1486px;height:21.5px;background:#f1f1f1;"></div>
<svg style="left:6px;top:1013px;" width="13" height="12" viewBox="0 0 13 12"><path d="M3 .6h9.400v8.800M.6 2.800h9.200v8.600h-9.200z" stroke="#7a7a7a" stroke-width="1" fill="none"/></svg>
<span class="t s" style="left:31.6px;top:1009.20px;font-size:12.5px;color:#1c1c1c;letter-spacing:-0.027px;">Launch succeeded (4 minutes ago)</span>
<span class="t s" style="left:1208px;top:1009.20px;font-size:12.5px;color:#1c1c1c;letter-spacing:-0.211px;">163 chars</span>
<span class="t s" style="left:1278.5px;top:1009.20px;font-size:12.5px;color:#1c1c1c;letter-spacing:0.184px;">2:249</span>
<span class="t s" style="left:1324.4px;top:1009.20px;font-size:12.5px;color:#1c1c1c;letter-spacing:-0.694px;">LF</span>
<span class="t s" style="left:1351px;top:1009.20px;font-size:12.5px;color:#1c1c1c;letter-spacing:-0.003px;">UTF-8</span>
<span class="t s" style="left:1400px;top:1009.20px;font-size:12.5px;color:#1c1c1c;letter-spacing:-0.066px;">4 spaces</span>
<svg style="left:1461.5px;top:1012.5px;" width="13" height="13" viewBox="0 0 13 13"><path d="M2.500 6v-2.500c0-3 4.500-3 4.500-.5" stroke="#7a7a7a" stroke-width="1.400" fill="none"/><rect x="4" y="6" width="8.500" height="6.500" fill="#7a7a7a"/></svg>
</div>
<div style="left:22px;top:75px;width:321px;height:624px;background:#ffffff;overflow:hidden;">
<div style="left:0px;top:0px;width:321px;height:27.5px;background:#f3f3f3;"></div>
<div style="left:0px;top:27px;width:321px;height:1px;background:#d6d6d6;"></div>
<svg style="left:10px;top:9.5px;" width="13" height="10.5" viewBox="0 0 13 10.5"><path d="M.5 11c0-3.800 2.600-6.200 6.500-6.200s6.500 2.400 6.500 6.200zM2.600 1l1.800 3.200M11.400 1l-1.800 3.200" fill="#3ddc84" stroke="#3ddc84" stroke-width="1"/><circle cx="4.500" cy="8" r=".7" fill="#fff"/><circle cx="9.500" cy="8" r=".7" fill="#fff"/></svg>
<span class="t s" style="left:28px;top:4.30px;font-size:14.2px;color:#2b2b2b;letter-spacing:-0.278px;">Android</span>
<svg style="left:85px;top:11.799999999999997px;" width="9.5" height="5.5" viewBox="0 0 9.5 5.5"><path d="M0 0h9l-4.500 5.200z" fill="#7a7a7a"/></svg>
<svg style="left:205.8px;top:6px;" width="16" height="16" viewBox="0 0 16 16"><circle cx="8" cy="8" r="6.500" stroke="#6e6e6e" stroke-width="1.600" fill="none"/><path d="M8 1.500v4.300M8 10.200v4.300M1.500 8h4.300M10.200 8h4.300" stroke="#6e6e6e" stroke-width="1.600"/></svg>
<svg style="left:235.8px;top:7px;" width="13" height="14" viewBox="0 0 13 14"><path d="M0 7h13" stroke="#6e6e6e" stroke-width="1.600"/><path d="M6.500 4.300l-3.400-3.600h6.800zM6.500 9.700l-3.400 3.600h6.800z" fill="#6e6e6e"/></svg>
<div style="left:259.7px;top:6px;width:1px;height:17px;background:#d9d9d9;"></div>
<svg style="left:271.7px;top:7px;" width="14" height="14" viewBox="0 0 16 16"><path d="M9.38 15.17 L6.62 15.17 L6.17 13.19 L4.43 12.18 L2.48 12.78 L1.10 10.39 L2.59 9.00 L2.59 7.00 L1.10 5.61 L2.48 3.22 L4.43 3.82 L6.17 2.81 L6.62 0.83 L9.38 0.83 L9.83 2.81 L11.57 3.82 L13.52 3.22 L14.90 5.61 L13.41 7.00 L13.41 9.00 L14.90 10.39 L13.52 12.78 L11.57 12.18 L9.83 13.19Z" fill="#6e6e6e" stroke="#6e6e6e" stroke-width=".8" stroke-linejoin="round"/><circle cx="8" cy="8" r="2.950" fill="#f3f3f3"/></svg>
<div style="left:301px;top:13.400000000000006px;width:12.2px;height:1.6px;background:#6e6e6e;"></div>
<div style="left:0px;top:71px;width:321px;height:20.5px;background:#d5d5d5;"></div>
<div style="left:0px;top:175.5px;width:321px;height:41px;background:#eef7e6;"></div>
<svg style="left:5.299999999999997px;top:36.39999999999999px;" width="10" height="7" viewBox="0 0 10 7"><path d="M1 1.200l4 4 4-4" stroke="#7f7f7f" stroke-width="1.200" fill="none"/></svg>
<svg style="left:25.5px;top:33.099999999999994px;" width="15" height="13" viewBox="0 0 15 13"><path d="M0 .8h5.600l1.600 2h7.800v9.700h-15z" fill="#9aa7b0"/></svg>
<svg style="left:34.5px;top:40.599999999999994px;" width="7" height="7" viewBox="0 0 7 7"><circle cx="3.500" cy="3.500" r="3" fill="#3fb950" stroke="#fff" stroke-width=".8"/></svg>
<span class="t s" style="left:45.0px;top:29.80px;font-size:14.2px;color:#1a1a1a;letter-spacing:-0.082px;font-weight:700;">app</span>
<svg style="left:24.599999999999994px;top:57.20000000000002px;" width="10" height="7" viewBox="0 0 10 7"><path d="M1 1.200l4 4 4-4" stroke="#7f7f7f" stroke-width="1.200" fill="none"/></svg>
<svg style="left:44.8px;top:53.900000000000006px;" width="15" height="13" viewBox="0 0 15 13"><path d="M0 .8h5.600l1.600 2h7.800v9.700h-15z" fill="#8fc8ea"/></svg>
<span class="t s" style="left:64.2px;top:50.60px;font-size:14.2px;color:#1a1a1a;letter-spacing:0.193px;">manifests</span>
<svg style="left:64.1px;top:73.19999999999999px;" width="15" height="16" viewBox="0 0 15 16"><path d="M6 0h5.500v7.500h-8.500v-4z" fill="#b4bcc1"/><path d="M6 0v3.500h-3z" fill="#d5dadd"/><rect x="0" y="8.500" width="15" height="7.500" fill="#b8e6c4"/></svg>
<span class="t s" style="left:65.3px;top:75.60px;font-size:6.8px;color:#3c8f55;font-weight:700;">MF</span>
<span class="t s" style="left:83.4px;top:71.40px;font-size:14.2px;color:#1a1a1a;letter-spacing:0.203px;">AndroidManifest.xml</span>
<svg style="left:24.599999999999994px;top:98.80000000000001px;" width="10" height="7" viewBox="0 0 10 7"><path d="M1 1.200l4 4 4-4" stroke="#7f7f7f" stroke-width="1.200" fill="none"/></svg>
<svg style="left:44.8px;top:95.5px;" width="15" height="13" viewBox="0 0 15 13"><path d="M0 .8h5.600l1.600 2h7.800v9.700h-15z" fill="#8fc8ea"/></svg>
<span class="t s" style="left:64.2px;top:92.20px;font-size:14.2px;color:#1a1a1a;letter-spacing:-0.138px;">java</span>
<svg style="left:43.89999999999999px;top:119.60000000000002px;" width="10" height="7" viewBox="0 0 10 7"><path d="M1 1.200l4 4 4-4" stroke="#7f7f7f" stroke-width="1.200" fill="none"/></svg>
<svg style="left:64.1px;top:116.30000000000001px;" width="15" height="13" viewBox="0 0 15 13"><path d="M0 .8h5.600l1.600 2h7.800v9.700h-15z" fill="#a4adb3"/></svg>
<svg style="left:66.89999999999999px;top:121.4px;" width="6" height="6" viewBox="0 0 6 6"><circle cx="3" cy="3" r="2.200" fill="#f4f6f7"/></svg>
<span class="t s" style="left:83.4px;top:113.00px;font-size:14.2px;color:#1a1a1a;letter-spacing:0.286px;">com.bradchao.mynotificationtest</span>
<div style="left:83.20px;top:136.60px;width:14px;height:14px;border-radius:50%;background:#6cc6e2;"></div>
<span class="t s" style="left:83.20px;top:132.70px;width:14px;text-align:center;font-size:11.5px;font-weight:700;color:#1f6f8f;">c</span>
<span class="t s" style="left:102.5px;top:133.80px;font-size:14.2px;color:#1a1a1a;letter-spacing:0.271px;">MainActivity</span>
<div style="left:83.20px;top:157.40px;width:14px;height:14px;border-radius:50%;background:#6cc6e2;"></div>
<span class="t s" style="left:83.20px;top:153.50px;width:14px;text-align:center;font-size:11.5px;font-weight:700;color:#1f6f8f;">c</span>
<span class="t s" style="left:102.5px;top:154.60px;font-size:14.2px;color:#1a1a1a;letter-spacing:0.080px;">MyService</span>
<svg style="left:44.3px;top:180.5px;" width="7" height="10" viewBox="0 0 7 10"><path d="M1.200 1l4 4-4 4" stroke="#7f7f7f" stroke-width="1.200" fill="none"/></svg>
<svg style="left:64.1px;top:178.7px;" width="15" height="13" viewBox="0 0 15 13"><path d="M0 .8h5.600l1.600 2h7.800v9.700h-15z" fill="#a4adb3"/></svg>
<svg style="left:66.89999999999999px;top:183.8px;" width="6" height="6" viewBox="0 0 6 6"><circle cx="3" cy="3" r="2.200" fill="#f4f6f7"/></svg>
<span class="t s" style="left:83.4px;top:175.40px;font-size:14.2px;color:#1a1a1a;letter-spacing:0.286px;">com.bradchao.mynotificationtest</span>
<span class="t s" style="left:295.9px;top:175.40px;font-size:14.2px;color:#8c8c8c;letter-spacing:0.174px;"> (androidTest)</span>
<svg style="left:44.3px;top:201.3px;" width="7" height="10" viewBox="0 0 7 10"><path d="M1.200 1l4 4-4 4" stroke="#7f7f7f" stroke-width="1.200" fill="none"/></svg>
<svg style="left:64.1px;top:199.5px;" width="15" height="13" viewBox="0 0 15 13"><path d="M0 .8h5.600l1.600 2h7.800v9.700h-15z" fill="#a4adb3"/></svg>
<svg style="left:66.89999999999999px;top:204.60000000000002px;" width="6" height="6" viewBox="0 0 6 6"><circle cx="3" cy="3" r="2.200" fill="#f4f6f7"/></svg>
<span class="t s" style="left:83.4px;top:196.20px;font-size:14.2px;color:#1a1a1a;letter-spacing:0.286px;">com.bradchao.mynotificationtest</span>
<span class="t s" style="left:295.9px;top:196.20px;font-size:14.2px;color:#8c8c8c;letter-spacing:0.145px;"> (test)</span>
<svg style="left:25.0px;top:222.10000000000002px;" width="7" height="10" viewBox="0 0 7 10"><path d="M1.200 1l4 4-4 4" stroke="#7f7f7f" stroke-width="1.200" fill="none"/></svg>
<svg style="left:44.8px;top:220.3px;" width="15" height="13" viewBox="0 0 15 13"><path d="M0 .8h5.600l1.600 2h7.800v9.700h-15z" fill="#8fc8ea"/></svg>
<svg style="left:51.8px;top:226.3px;" width="9" height="9" viewBox="0 0 9 9"><circle cx="4.500" cy="4.500" r="3.800" fill="#fff"/><path d="M4.500 1v7M1 4.500h7M2 2l5 5M7 2l-5 5" stroke="#9aa7b0" stroke-width="1"/></svg>
<span class="t s" style="left:64.2px;top:217.00px;font-size:14.2px;color:#1a1a1a;letter-spacing:-0.138px;">java</span>
<span class="t s" style="left:89.7px;top:217.00px;font-size:14.2px;color:#8c8c8c;letter-spacing:0.012px;"> (generated)</span>
<svg style="left:25.0px;top:242.90000000000003px;" width="7" height="10" viewBox="0 0 7 10"><path d="M1.200 1l4 4-4 4" stroke="#7f7f7f" stroke-width="1.200" fill="none"/></svg>
<svg style="left:44.8px;top:241.10000000000002px;" width="15" height="13" viewBox="0 0 15 13"><path d="M0 .8h5.600l1.600 2h7.800v9.700h-15z" fill="#a4adb3"/></svg>
<svg style="left:53.3px;top:247.10000000000002px;" width="7" height="8.5" viewBox="0 0 7 8.5"><rect width="7" height="8.500" fill="#fff"/><path d="M.8 1.500h5.400M.8 3.700h5.400M.8 5.900h5.400M.8 8h5.400" stroke="#e8b84a" stroke-width="1.400"/></svg>
<span class="t s" style="left:64.2px;top:237.80px;font-size:14.2px;color:#1a1a1a;letter-spacing:-0.076px;">res</span>
<svg style="left:25.0px;top:263.7px;" width="7" height="10" viewBox="0 0 7 10"><path d="M1.200 1l4 4-4 4" stroke="#7f7f7f" stroke-width="1.200" fill="none"/></svg>
<svg style="left:44.8px;top:261.9px;" width="15" height="13" viewBox="0 0 15 13"><path d="M0 .8h5.600l1.600 2h7.800v9.700h-15z" fill="#a4adb3"/></svg>
<svg style="left:53.3px;top:267.9px;" width="7" height="8.5" viewBox="0 0 7 8.5"><rect width="7" height="8.500" fill="#fff"/><path d="M.8 1.500h5.400M.8 3.700h5.400M.8 5.900h5.400M.8 8h5.400" stroke="#e8b84a" stroke-width="1.400"/></svg>
<span class="t s" style="left:64.2px;top:258.60px;font-size:14.2px;color:#1a1a1a;letter-spacing:-0.076px;">res</span>
<span class="t s" style="left:83.7px;top:258.60px;font-size:14.2px;color:#8c8c8c;letter-spacing:0.012px;"> (generated)</span>
<svg style="left:5.299999999999997px;top:286.00000000000006px;" width="10" height="7" viewBox="0 0 10 7"><path d="M1 1.200l4 4 4-4" stroke="#7f7f7f" stroke-width="1.200" fill="none"/></svg>
<svg style="left:25.0px;top:283.20000000000005px;" width="16" height="12.6" viewBox="0 0 14 11"><g transform="scale(.875 1)"><path fill="#6e6e6e" d="M.6 10.800V6.200C.6 3.500 2.600 2.100 5.400 2.100H8.300C9.100 1 10.500.5 11.900.9c1.500.5 2.200 1.900 1.900 3.300l-.4 1.700h-1.800v4.900h-2.200v-2.500h-1.500v2.500h-2.200v-2.500h-1.300v2.500z"/><path d="M12.600 5.300c.9 1.300 2.900.7 2.900-1 0-1.300-1.100-2-1.900-1.500" stroke="#6e6e6e" stroke-width="1.150" fill="none"/></g></svg>
<span class="t s" style="left:45.0px;top:279.40px;font-size:14.2px;color:#1a1a1a;letter-spacing:0.074px;">Gradle Scripts</span>
<svg style="left:44.8px;top:304.0px;" width="16" height="12.6" viewBox="0 0 14 11"><g transform="scale(.875 1)"><path fill="#aab2b7" d="M.6 10.800V6.200C.6 3.500 2.600 2.100 5.400 2.100H8.300C9.100 1 10.500.5 11.900.9c1.500.5 2.200 1.900 1.900 3.300l-.4 1.700h-1.800v4.900h-2.200v-2.500h-1.500v2.500h-2.200v-2.500h-1.300v2.500z"/><path d="M12.600 5.300c.9 1.300 2.900.7 2.900-1 0-1.300-1.100-2-1.900-1.500" stroke="#aab2b7" stroke-width="1.150" fill="none"/></g></svg>
<span class="t s" style="left:64.2px;top:300.20px;font-size:14.2px;color:#1a1a1a;letter-spacing:0.215px;">build.gradle</span>
<span class="t s" style="left:140.2px;top:300.20px;font-size:14.2px;color:#8c8c8c;letter-spacing:0.301px;"> (Project: MyNotificationTest)</span>
<svg style="left:44.8px;top:324.79999999999995px;" width="16" height="12.6" viewBox="0 0 14 11"><g transform="scale(.875 1)"><path fill="#aab2b7" d="M.6 10.800V6.200C.6 3.500 2.600 2.100 5.400 2.100H8.300C9.100 1 10.500.5 11.900.9c1.500.5 2.200 1.900 1.900 3.300l-.4 1.700h-1.800v4.900h-2.200v-2.500h-1.500v2.500h-2.200v-2.500h-1.300v2.500z"/><path d="M12.600 5.300c.9 1.300 2.900.7 2.900-1 0-1.300-1.100-2-1.900-1.500" stroke="#aab2b7" stroke-width="1.150" fill="none"/></g></svg>
<span class="t s" style="left:64.2px;top:321.00px;font-size:14.2px;color:#1a1a1a;letter-spacing:0.215px;">build.gradle</span>
<span class="t s" style="left:140.2px;top:321.00px;font-size:14.2px;color:#8c8c8c;letter-spacing:0.236px;"> (Module: MyNotificationTest.app)</span>
<svg style="left:46.8px;top:343.6px;" width="14" height="16" viewBox="0 0 14 16"><path d="M5 0h5.500v8h-8v-5z" fill="#b4bcc1"/><path d="M5 0v3h-2.500z" fill="#d5dadd"/><path d="M0 9h2.600v7h-2.600z" fill="#9aa7b0"/><path d="M3.800 6.500h2.600v9.500h-2.600z" fill="#62b543"/><path d="M7.600 9.500h2.600v6.500h-2.600z" fill="#e8a33d"/><path d="M11.400 7.500h2.600v8.500h-2.600z" fill="#e05555"/></svg>
<span class="t s" style="left:64.2px;top:341.80px;font-size:14.2px;color:#1a1a1a;letter-spacing:0.307px;">gradle-wrapper.properties</span>
<span class="t s" style="left:233.7px;top:341.80px;font-size:14.2px;color:#8c8c8c;letter-spacing:0.177px;"> (Gradle Version)</span>
<svg style="left:46.8px;top:365.4px;" width="11" height="14" viewBox="0 0 11 14"><path d="M0 3.500l3.500-3.500h7.500v14h-11z" fill="#b9bfc3"/><path d="M2 5.500h7M2 7.700h7M2 9.900h7M2 12h5" stroke="#7f878c" stroke-width="1"/></svg>
<span class="t s" style="left:64.2px;top:362.60px;font-size:14.2px;color:#1a1a1a;letter-spacing:0.288px;">proguard-rules.pro</span>
<span class="t s" style="left:186.2px;top:362.60px;font-size:14.2px;color:#8c8c8c;letter-spacing:0.238px;"> (ProGuard Rules for MyNotificationTest.app)</span>
<svg style="left:46.8px;top:385.20000000000005px;" width="14" height="16" viewBox="0 0 14 16"><path d="M5 0h5.500v8h-8v-5z" fill="#b4bcc1"/><path d="M5 0v3h-2.500z" fill="#d5dadd"/><path d="M0 9h2.600v7h-2.600z" fill="#9aa7b0"/><path d="M3.800 6.500h2.600v9.500h-2.600z" fill="#62b543"/><path d="M7.600 9.500h2.600v6.500h-2.600z" fill="#e8a33d"/><path d="M11.400 7.500h2.600v8.500h-2.600z" fill="#e05555"/></svg>
<span class="t s" style="left:64.2px;top:383.40px;font-size:14.2px;color:#1a1a1a;letter-spacing:0.231px;">gradle.properties</span>
<span class="t s" style="left:174.7px;top:383.40px;font-size:14.2px;color:#8c8c8c;letter-spacing:0.178px;"> (Project Properties)</span>
<svg style="left:44.8px;top:408.0px;" width="16" height="12.6" viewBox="0 0 14 11"><g transform="scale(.875 1)"><path fill="#aab2b7" d="M.6 10.800V6.200C.6 3.500 2.600 2.100 5.400 2.100H8.300C9.100 1 10.500.5 11.900.9c1.500.5 2.200 1.900 1.900 3.300l-.4 1.700h-1.800v4.900h-2.200v-2.500h-1.500v2.500h-2.200v-2.500h-1.300v2.500z"/><path d="M12.600 5.300c.9 1.300 2.900.7 2.900-1 0-1.300-1.100-2-1.900-1.500" stroke="#aab2b7" stroke-width="1.150" fill="none"/></g></svg>
<span class="t s" style="left:64.2px;top:404.20px;font-size:14.2px;color:#1a1a1a;letter-spacing:0.229px;">settings.gradle</span>
<span class="t s" style="left:160.0px;top:404.20px;font-size:14.2px;color:#8c8c8c;letter-spacing:0.218px;"> (Project Settings)</span>
<svg style="left:46.8px;top:426.79999999999995px;" width="14" height="16" viewBox="0 0 14 16"><path d="M5 0h5.500v8h-8v-5z" fill="#b4bcc1"/><path d="M5 0v3h-2.500z" fill="#d5dadd"/><path d="M0 9h2.600v7h-2.600z" fill="#9aa7b0"/><path d="M3.800 6.500h2.600v9.500h-2.600z" fill="#62b543"/><path d="M7.600 9.500h2.600v6.500h-2.600z" fill="#e8a33d"/><path d="M11.400 7.500h2.600v8.500h-2.600z" fill="#e05555"/></svg>
<span class="t s" style="left:64.2px;top:425.00px;font-size:14.2px;color:#1a1a1a;letter-spacing:0.250px;">local.properties</span>
<span class="t s" style="left:164.5px;top:425.00px;font-size:14.2px;color:#8c8c8c;letter-spacing:0.031px;"> (SDK Location)</span>
<div style="left:0px;top:611px;width:321px;height:13px;background:#f7f7f7;"></div>
<div style="left:2px;top:612.3px;width:209.5px;height:9px;background:#c7c7c7;border-radius:4.500px;"></div>
</div>
<div style="left:343px;top:75px;width:1px;height:624px;background:#d1d1d1;"></div>
<div style="left:344px;top:75px;width:1121.5px;height:27.5px;background:#f3f3f3;"></div>
<div style="left:344px;top:102px;width:1121.5px;height:1px;background:#d6d6d6;"></div>
<svg style="left:353.2px;top:81.6px;" width="16" height="16" viewBox="0 0 16 16"><path d="M6.500 0h5.500v7.500h-9v-4z" fill="#b4bcc1"/><path d="M6.500 0v3.500h-3.500z" fill="#d5dadd"/><rect x="0" y="8.500" width="16" height="7.500" fill="#f0875a"/><path d="M5.500 10.200l-2.300 2 2.300 2M9.500 10.200l2.300 2-2.300 2" stroke="#8a2f10" stroke-width="1.100" fill="none"/></svg>
<span class="t s" style="left:372.7px;top:79.60px;font-size:13px;color:#1c1c1c;letter-spacing:-0.163px;">activity_main.xml</span>
<svg style="left:475.7px;top:85.39999999999999px;" width="9" height="9" viewBox="0 0 9 9"><path d="M.8 .8l7.400 7.400M8.200 .8l-7.400 7.400" stroke="#bdbdbd" stroke-width="1.050"/></svg>
<div style="left:501.10px;top:82.60px;width:14px;height:14px;border-radius:50%;background:#6cc6e2;"></div>
<span class="t s" style="left:501.10px;top:78.70px;width:14px;text-align:center;font-size:11.5px;font-weight:700;color:#1f6f8f;">c</span>
<span class="t s" style="left:520.3px;top:79.60px;font-size:13px;color:#1c1c1c;letter-spacing:-0.138px;">MainActivity.java</span>
<svg style="left:620.7px;top:85.39999999999999px;" width="9" height="9" viewBox="0 0 9 9"><path d="M.8 .8l7.400 7.400M8.200 .8l-7.400 7.400" stroke="#bdbdbd" stroke-width="1.050"/></svg>
<div style="left:636px;top:75px;width:136.5px;height:27px;background:#ffffff;"></div>
<div style="left:636px;top:99.5px;width:136.5px;height:3px;background:#9aa7bf;"></div>
<div style="left:646.00px;top:82.60px;width:14px;height:14px;border-radius:50%;background:#6cc6e2;"></div>
<span class="t s" style="left:646.00px;top:78.70px;width:14px;text-align:center;font-size:11.5px;font-weight:700;color:#1f6f8f;">c</span>
<span class="t s" style="left:665.2px;top:79.60px;font-size:13px;color:#1c1c1c;letter-spacing:-0.346px;">MyService.java</span>
<svg style="left:755.5px;top:85.39999999999999px;" width="9" height="9" viewBox="0 0 9 9"><path d="M.8 .8l7.400 7.400M8.200 .8l-7.400 7.400" stroke="#bdbdbd" stroke-width="1.050"/></svg>
<svg style="left:780.6px;top:81.6px;" width="16" height="16" viewBox="0 0 16 16"><path d="M6.500 0h5.500v7.500h-9v-4z" fill="#b4bcc1"/><path d="M6.500 0v3.500h-3.500z" fill="#d5dadd"/><rect x="0" y="8.500" width="16" height="7.500" fill="#b8e6c4"/></svg>
<span class="t s" style="left:782.1px;top:84.00px;font-size:6.8px;color:#3c8f55;font-weight:700;">MF</span>
<span class="t s" style="left:800.1px;top:79.60px;font-size:13px;color:#1c1c1c;letter-spacing:-0.193px;">AndroidManifest.xml</span>
<svg style="left:920.5px;top:85.39999999999999px;" width="9" height="9" viewBox="0 0 9 9"><path d="M.8 .8l7.400 7.400M8.200 .8l-7.400 7.400" stroke="#bdbdbd" stroke-width="1.050"/></svg>
<div style="left:344px;top:103px;width:1121px;height:596px;background:#ffffff;overflow:hidden;">
<div style="left:0px;top:0px;width:68.5px;height:596px;background:#f0f0f0;"></div>
<div style="left:0px;top:213.7px;width:68.5px;height:26.6px;background:#f6f4e6;"></div>
<div style="left:68.5px;top:213.7px;width:1052.5px;height:26.6px;background:#fcfaed;"></div>
<div style="left:1076.5px;top:25px;width:1px;height:558px;background:#ececec;"></div>
<div style="left:113.5px;top:187.5px;width:1px;height:53px;background:#e3e3e3;"></div>
<div style="left:113.5px;top:347px;width:1px;height:53px;background:#e3e3e3;"></div>
<div style="left:146px;top:54px;width:30px;height:25.8px;background:#e8f4e5;border-radius:2px;"></div>
<span class="t m" style="left:14.0px;top:4.60px;font-size:16.667px;color:#b2b2b2;-webkit-text-stroke:0;">1</span>
<span class="t m" style="left:14.0px;top:31.25px;font-size:16.667px;color:#b2b2b2;-webkit-text-stroke:0;">2</span>
<span class="t m" style="left:14.0px;top:57.90px;font-size:16.667px;color:#b2b2b2;-webkit-text-stroke:0;">3</span>
<span class="t m" style="left:4.0px;top:84.55px;font-size:16.667px;color:#b2b2b2;-webkit-text-stroke:0;">12</span>
<span class="t m" style="left:4.0px;top:111.20px;font-size:16.667px;color:#b2b2b2;-webkit-text-stroke:0;">13</span>
<span class="t m" style="left:4.0px;top:137.85px;font-size:16.667px;color:#b2b2b2;-webkit-text-stroke:0;">14</span>
<span class="t m" style="left:4.0px;top:164.50px;font-size:16.667px;color:#b2b2b2;-webkit-text-stroke:0;">15</span>
<span class="t m" style="left:4.0px;top:191.15px;font-size:16.667px;color:#b2b2b2;-webkit-text-stroke:0;">16</span>
<span class="t m" style="left:4.0px;top:217.80px;font-size:16.667px;color:#b2b2b2;-webkit-text-stroke:0;">17</span>
<span class="t m" style="left:4.0px;top:244.45px;font-size:16.667px;color:#b2b2b2;-webkit-text-stroke:0;">18</span>
<span class="t m" style="left:4.0px;top:271.10px;font-size:16.667px;color:#b2b2b2;-webkit-text-stroke:0;">19</span>
<span class="t m" style="left:4.0px;top:297.75px;font-size:16.667px;color:#b2b2b2;-webkit-text-stroke:0;">20</span>
<span class="t m" style="left:4.0px;top:324.40px;font-size:16.667px;color:#b2b2b2;-webkit-text-stroke:0;">21</span>
<span class="t m" style="left:4.0px;top:351.05px;font-size:16.667px;color:#b2b2b2;-webkit-text-stroke:0;">22</span>
<span class="t m" style="left:4.0px;top:377.70px;font-size:16.667px;color:#b2b2b2;-webkit-text-stroke:0;">23</span>
<span class="t m" style="left:4.0px;top:404.35px;font-size:16.667px;color:#b2b2b2;-webkit-text-stroke:0;">24</span>
<span class="t m" style="left:4.0px;top:431.00px;font-size:16.667px;color:#b2b2b2;-webkit-text-stroke:0;">25</span>
<span class="t m" style="left:76.0px;top:5.00px;font-size:16.667px;color:#080808;"><span style="position:static;color:#0a2f9e;">package</span><span style="position:static;color:#080808;"> com.bradchao.mynotificationtest;</span></span>
<span class="t m" style="left:76.0px;top:58.30px;font-size:16.667px;color:#080808;"><span style="position:static;color:#8c8c8c;">import </span><span style="position:static;color:#4d6b4a;">...</span></span>
<span class="t m" style="left:76.0px;top:111.60px;font-size:16.667px;color:#080808;"><span style="position:static;color:#0a2f9e;">public class</span><span style="position:static;color:#080808;"> MyService </span><span style="position:static;color:#0a2f9e;">extends</span><span style="position:static;color:#080808;"> FirebaseMessagingService {</span></span>
<span class="t m" style="left:76.0px;top:138.25px;font-size:16.667px;color:#080808;"><span style="position:static;color:#9e880d;">    @Override</span></span>
<span class="t m" style="left:76.0px;top:164.90px;font-size:16.667px;color:#080808;"><span style="position:static;color:#0a2f9e;">    public void </span><span style="position:static;color:#00627a;">onMessageReceived</span><span style="position:static;color:#080808;">(</span><span style="position:static;color:#9e880d;">@NonNull @</span><span style="position:static;color:#080808;">org.jetbrains.annotations.</span><span style="position:static;color:#9e880d;">NotNull</span><span style="position:static;color:#080808;"> RemoteMessage remoteMessage</span></span>
<span class="t m" style="left:76.0px;top:191.55px;font-size:16.667px;color:#080808;"><span style="position:static;color:#0a2f9e;">        super</span><span style="position:static;color:#080808;">.onMessageReceived(remoteMessage);</span></span>
<span class="t m" style="left:76.0px;top:244.85px;font-size:16.667px;color:#080808;"><span style="position:static;color:#080808;">    }</span></span>
<span class="t m" style="left:76.0px;top:298.15px;font-size:16.667px;color:#080808;"><span style="position:static;color:#9e880d;">    @Override</span></span>
<span class="t m" style="left:76.0px;top:324.80px;font-size:16.667px;color:#080808;"><span style="position:static;color:#0a2f9e;">    public void </span><span style="position:static;color:#00627a;">onNewToken</span><span style="position:static;color:#080808;">(</span><span style="position:static;color:#9e880d;">@NonNull @</span><span style="position:static;color:#080808;">org.jetbrains.annotations.</span><span style="position:static;color:#9e880d;">NotNull</span><span style="position:static;color:#080808;"> String s) {</span></span>
<span class="t m" style="left:76.0px;top:351.45px;font-size:16.667px;color:#080808;"><span style="position:static;color:#0a2f9e;">        super</span><span style="position:static;color:#080808;">.onNewToken(s);</span></span>
<span class="t m" style="left:76.0px;top:404.75px;font-size:16.667px;color:#080808;"><span style="position:static;color:#080808;">    }</span></span>
<span class="t m" style="left:76.0px;top:431.40px;font-size:16.667px;color:#080808;"><span style="position:static;color:#080808;">}</span></span>
<span class="t m" style="left:76.0px;top:218.20px;font-size:16.667px;color:#080808;"><span style="position:static;color:#080808;">        Log.</span><span style="position:static;color:#080808;font-style:italic;">v</span><span style="position:static;color:#080808;">(</span></span>
<div style="left:218.79999999999995px;top:215.7px;width:36.7px;height:23.4px;background:rgba(0,0,0,.045);border-radius:3px;"></div>
<span class="t s" style="left:221.5px;top:217.20px;font-size:15px;color:#8c8c8c;letter-spacing:1.245px;">tag:</span>
<span class="t m" style="left:259px;top:218.20px;font-size:16.667px;color:#080808;"><span style="position:static;color:#067d17;">&quot;bradlog&quot;</span><span style="position:static;color:#080808;">,</span></span>
<div style="left:370px;top:215.7px;width:44.7px;height:23.4px;background:rgba(0,0,0,.045);border-radius:3px;"></div>
<span class="t s" style="left:373.5px;top:217.20px;font-size:15px;color:#8c8c8c;letter-spacing:1.124px;">msg:</span>
<span class="t m" style="left:418px;top:218.20px;font-size:16.667px;color:#080808;"><span style="position:static;color:#067d17;">&quot;receive message&quot;</span><span style="position:static;color:#080808;">);</span></span>
<svg style="left:268px;top:235.7px;" width="71" height="4" viewBox="0 0 71 4"><path d="M0 2l2.200 -2l2.200 2l2.200 -2l2.200 2l2.200 -2l2.200 2l2.200 -2l2.200 2l2.200 -2l2.200 2l2.200 -2l2.200 2l2.200 -2l2.200 2l2.200 -2l2.200 2l2.200 -2l2.200 2l2.200 -2l2.200 2l2.200 -2l2.200 2l2.200 -2l2.200 2l2.200 -2l2.200 2l2.200 -2l2.200 2l2.200 -2l2.200 2l2.200 -2l2.200 2" stroke="#7cc48a" stroke-width=".9" fill="none"/></svg>
<span class="t m" style="left:76.0px;top:378.10px;font-size:16.667px;color:#080808;"><span style="position:static;color:#080808;">        Log.</span><span style="position:static;color:#080808;font-style:italic;">v</span><span style="position:static;color:#080808;">(</span></span>
<div style="left:218.79999999999995px;top:375.59999999999997px;width:36.7px;height:23.4px;background:rgba(0,0,0,.045);border-radius:3px;"></div>
<span class="t s" style="left:221.5px;top:377.10px;font-size:15px;color:#8c8c8c;letter-spacing:1.245px;">tag:</span>
<span class="t m" style="left:259px;top:378.10px;font-size:16.667px;color:#080808;"><span style="position:static;color:#067d17;">&quot;bradlog&quot;</span><span style="position:static;color:#080808;">,</span></span>
<div style="left:370px;top:375.59999999999997px;width:44.7px;height:23.4px;background:rgba(0,0,0,.045);border-radius:3px;"></div>
<span class="t s" style="left:373.5px;top:377.10px;font-size:15px;color:#8c8c8c;letter-spacing:1.124px;">msg:</span>
<span class="t m" style="left:418px;top:378.10px;font-size:16.667px;color:#080808;"><span style="position:static;color:#067d17;">&quot;new token:&quot;</span><span style="position:static;color:#080808;"> + s);</span></span>
<svg style="left:268px;top:395.59999999999997px;" width="71" height="4" viewBox="0 0 71 4"><path d="M0 2l2.200 -2l2.200 2l2.200 -2l2.200 2l2.200 -2l2.200 2l2.200 -2l2.200 2l2.200 -2l2.200 2l2.200 -2l2.200 2l2.200 -2l2.200 2l2.200 -2l2.200 2l2.200 -2l2.200 2l2.200 -2l2.200 2l2.200 -2l2.200 2l2.200 -2l2.200 2l2.200 -2l2.200 2l2.200 -2l2.200 2l2.200 -2l2.200 2l2.200 -2l2.200 2" stroke="#7cc48a" stroke-width=".9" fill="none"/></svg>
<svg style="left:31.399999999999977px;top:111.10000000000002px;" width="21.5" height="19.8" viewBox="0 0 21.5 19.8"><path d="M9 0h7v9h-11.500v-5z" fill="#b4bcc1"/><path d="M9 0v4.500h-4.500z" fill="#d5dadd"/><rect x="0" y="10.200" width="21.500" height="9.600" fill="#f0875a"/><path d="M7.200 12.300l-3 2.700 3 2.700M12.300 12.300l3 2.700-3 2.700" stroke="#7a2a0e" stroke-width="1.300" fill="none"/></svg>
<svg style="left:29.5px;top:166.59999999999997px;" width="18" height="15" viewBox="0 0 18 15"><circle cx="6" cy="7.500" r="5" fill="#4fa6c9"/><circle cx="6" cy="7.500" r="2" fill="none" stroke="#1e5d7a" stroke-width="1.300"/><path d="M14 14.500v-12M11.300 5.200l2.700-3.200 2.700 3.200" stroke="#e0454f" stroke-width="1.300" fill="none"/></svg>
<svg style="left:29.5px;top:326.49999999999994px;" width="18" height="15" viewBox="0 0 18 15"><circle cx="6" cy="7.500" r="5" fill="#4fa6c9"/><circle cx="6" cy="7.500" r="2" fill="none" stroke="#1e5d7a" stroke-width="1.300"/><path d="M14 14.500v-12M11.300 5.200l2.700-3.200 2.700 3.200" stroke="#e0454f" stroke-width="1.300" fill="none"/></svg>
<svg style="left:62.80000000000001px;top:62.5px;" width="10.5" height="10.5" viewBox="0 0 10.5 10.5"><rect x=".5" y=".5" width="9.500" height="9.500" fill="#fff" stroke="#c9c9c9"/><path d="M2.700 5.250h5.100M5.250 2.700v5.100" stroke="#c9c9c9" stroke-width="1"/></svg>
<svg style="left:62.80000000000001px;top:169.09999999999997px;" width="10.5" height="11.5" viewBox="0 0 10.5 11.5"><path d="M.5 .5h9.500v6l-4.750 4.300-4.750-4.300z" fill="#fff" stroke="#c9c9c9"/><path d="M2.700 4.500h5.100" stroke="#c9c9c9" stroke-width="1"/></svg>
<svg style="left:62.80000000000001px;top:328.99999999999994px;" width="10.5" height="11.5" viewBox="0 0 10.5 11.5"><path d="M.5 .5h9.500v6l-4.750 4.300-4.750-4.300z" fill="#fff" stroke="#c9c9c9"/><path d="M2.700 4.500h5.100" stroke="#c9c9c9" stroke-width="1"/></svg>
<svg style="left:62.80000000000001px;top:248.05px;" width="10.5" height="11.5" viewBox="0 0 10.5 11.5"><path d="M.5 11h9.500v-6l-4.750-4.300-4.750 4.300z" fill="#fff" stroke="#c9c9c9"/><path d="M2.700 7h5.100" stroke="#c9c9c9" stroke-width="1"/></svg>
<svg style="left:62.80000000000001px;top:407.95000000000005px;" width="10.5" height="11.5" viewBox="0 0 10.5 11.5"><path d="M.5 11h9.500v-6l-4.750-4.300-4.750 4.300z" fill="#fff" stroke="#c9c9c9"/><path d="M2.700 7h5.100" stroke="#c9c9c9" stroke-width="1"/></svg>
<svg style="left:1017.5px;top:8.700000000000003px;" width="12" height="11.5" viewBox="0 0 12 11.5"><path d="M6 .3l5.800 10.900h-11.600z" fill="#f2bf3d"/><path d="M6 4v3.800" stroke="#fff" stroke-width="1.400"/><circle cx="6" cy="9.300" r=".8" fill="#fff"/></svg>
<span class="t s" style="left:1033px;top:5.00px;font-size:12px;color:#8c8c8c;">3</span>
<svg style="left:1048px;top:8.700000000000003px;" width="13" height="12.5" viewBox="0 0 13 12.5"><path d="M1 5.500l3.500 3.500 7-8" stroke="#4aa35a" stroke-width="2" fill="none"/><path d="M.5 11.500l1.500-1.500 1.500 1.500 1.500-1.500 1.500 1.500 1.500-1.500 1.500 1.500 1.500-1.500 1.500 1.500" stroke="#4aa35a" stroke-width=".9" fill="none"/></svg>
<span class="t s" style="left:1064px;top:5.00px;font-size:12px;color:#8c8c8c;">2</span>
<svg style="left:1080.5px;top:11.700000000000003px;" width="9.5" height="6" viewBox="0 0 9.5 6"><path d="M.7 5.300l4-4 4 4" stroke="#6e6e6e" stroke-width="1.300" fill="none"/></svg>
<svg style="left:1103px;top:11.700000000000003px;" width="9.5" height="6" viewBox="0 0 9.5 6"><path d="M.7 .7l4 4 4-4" stroke="#6e6e6e" stroke-width="1.300" fill="none"/></svg>
<div style="left:1108.5px;top:31.5px;width:9.5px;height:541px;background:rgba(0,0,0,.21);border-radius:4.750px;"></div>
<div style="left:1106px;top:79.5px;width:15px;height:2px;background:#e6b422;"></div>
<div style="left:68.5px;top:582.5px;width:1052.5px;height:13.5px;background:#ffffff;"></div>
<div style="left:78.5px;top:584px;width:978.5px;height:9px;background:#c7c7c7;border-radius:4.500px;"></div>
</div>
<div style="left:22px;top:699px;width:1443px;height:1px;background:#d1d1d1;"></div>
<div style="left:22px;top:700px;width:1443px;height:307px;background:#f3f3f3;overflow:hidden;">
<span class="t s" style="left:5.5px;top:4.00px;font-size:13.6px;color:#1a1a1a;letter-spacing:-0.056px;">Logcat</span>
<svg style="left:1393.4px;top:7px;" width="14" height="14" viewBox="0 0 16 16"><path d="M9.38 15.17 L6.62 15.17 L6.17 13.19 L4.43 12.18 L2.48 12.78 L1.10 10.39 L2.59 9.00 L2.59 7.00 L1.10 5.61 L2.48 3.22 L4.43 3.82 L6.17 2.81 L6.62 0.83 L9.38 0.83 L9.83 2.81 L11.57 3.82 L13.52 3.22 L14.90 5.61 L13.41 7.00 L13.41 9.00 L14.90 10.39 L13.52 12.78 L11.57 12.18 L9.83 13.19Z" fill="#6e6e6e" stroke="#6e6e6e" stroke-width=".8" stroke-linejoin="round"/><circle cx="8" cy="8" r="2.950" fill="#f3f3f3"/></svg>
<div style="left:1422.7px;top:13.299999999999955px;width:12.6px;height:1.6px;background:#6e6e6e;"></div>
<div style="left:0px;top:27px;width:1443px;height:1px;background:#d6d6d6;"></div>
<div style="left:8px;top:37px;width:254px;height:24.5px;background:#ffffff;border:1px solid #c4c4c4;border-radius:3.500px;"></div>
<svg style="left:17px;top:42.5px;" width="9" height="13.5" viewBox="0 0 9 13.5"><rect x=".7" y=".7" width="7.600" height="12" rx="1.400" stroke="#7a7a7a" stroke-width="1.300" fill="#fff"/></svg>
<span class="t s" style="left:33.5px;top:39.30px;font-size:14.2px;color:#1a1a1a;letter-spacing:-0.069px;">Google Pixel 4 XL</span>
<span class="t s" style="left:152px;top:39.30px;font-size:14.2px;color:#8c8c8c;letter-spacing:-0.154px;">Android 11, AI</span>
<svg style="left:245.3px;top:46.700000000000045px;" width="9.5" height="5.5" viewBox="0 0 9.5 5.5"><path d="M0 0h9l-4.500 5.200z" fill="#6e6e6e"/></svg>
<div style="left:273.5px;top:37px;width:254px;height:24.5px;background:#ffffff;border:1px solid #c4c4c4;border-radius:3.500px;"></div>
<span class="t s" style="left:280px;top:39.30px;font-size:14.2px;color:#1a1a1a;letter-spacing:-0.226px;">com.bradchao.</span>
<span class="t s" style="left:371px;top:39.30px;font-size:14.2px;color:#1a1a1a;letter-spacing:0.484px;font-weight:700;">mynotificationtest</span>
<svg style="left:510.79999999999995px;top:46.700000000000045px;" width="9.5" height="5.5" viewBox="0 0 9.5 5.5"><path d="M0 0h9l-4.500 5.200z" fill="#6e6e6e"/></svg>
<div style="left:544.6px;top:37px;width:90px;height:24.5px;background:#ffffff;border:1px solid #c4c4c4;border-radius:3.500px;"></div>
<span class="t s" style="left:549.8px;top:39.30px;font-size:14.2px;color:#1a1a1a;letter-spacing:0.099px;">Verbose</span>
<svg style="left:618px;top:46.700000000000045px;" width="9.5" height="5.5" viewBox="0 0 9.5 5.5"><path d="M0 0h9l-4.500 5.200z" fill="#6e6e6e"/></svg>
<div style="left:646px;top:37px;width:444.5px;height:24.5px;background:#ffffff;border:1px solid #c4c4c4;border-radius:3.500px;"></div>
<svg style="left:652.5px;top:42.5px;" width="18" height="13" viewBox="0 0 18 13"><circle cx="5.800" cy="5.800" r="4.200" stroke="#8a8a8a" stroke-width="1.200" fill="none"/><path d="M8.800 8.800l3.400 3.400" stroke="#8a8a8a" stroke-width="1.300"/><path d="M12.800 5.300h4l-2 2.200z" fill="#8a8a8a"/></svg>
<div style="left:1102px;top:41.5px;width:14.6px;height:14.4px;background:#3d8edb;border-radius:3px;"></div>
<svg style="left:1102px;top:41.5px;" width="14.6" height="14.4" viewBox="0 0 14.6 14.4"><path d="M3.300 7.300l2.900 3 5.200-6.300" stroke="#fff" stroke-width="1.900" fill="none"/></svg>
<span class="t s" style="left:1123.3px;top:39.30px;font-size:14.2px;color:#1a1a1a;letter-spacing:-0.270px;">Regex</span>
<div style="left:1180px;top:37px;width:254.7px;height:24.5px;background:#ffffff;border:1px solid #c4c4c4;border-radius:3.500px;"></div>
<span class="t s" style="left:1186.3px;top:39.30px;font-size:14.2px;color:#1a1a1a;letter-spacing:0.144px;">brad</span>
<svg style="left:1418px;top:46.700000000000045px;" width="9.5" height="5.5" viewBox="0 0 9.5 5.5"><path d="M0 0h9l-4.500 5.200z" fill="#6e6e6e"/></svg>
<svg style="left:14px;top:80px;" width="11.5" height="9.5" viewBox="0 0 11.5 9.5"><path d="M0 1h11.500M0 4.700h7.500M0 8.400h9.500" stroke="#6e6e6e" stroke-width="1.400"/></svg>
<span class="t s" style="left:30px;top:74.50px;font-size:13px;color:#1a1a1a;letter-spacing:-0.198px;">logcat</span>
<svg style="left:1421px;top:78.39999999999998px;" width="15.5" height="14.5" viewBox="0 0 15.5 14.5"><path d="M0 0h6.200v5h-6.200zM7.400 0h6.200v5h-6.200zM0 6.200h13.600v4h-13.600z" fill="#6e6e6e"/><path d="M9.800 11.800h5l-2.500 2.600z" fill="#6e6e6e"/></svg>
<div style="left:0px;top:98px;width:1443px;height:1px;background:#d6d6d6;"></div>
<div style="left:0px;top:99px;width:29.5px;height:208px;background:#f3f3f3;"></div>
<svg style="left:9.299999999999997px;top:106.79999999999995px;" width="12" height="14" viewBox="0 0 12 14"><path d="M1 3.500h10v1.600h-10zM4 1.500h4v2h-4zM2 6h8l-.6 8h-6.800z" fill="#6e6e6e"/></svg>
<svg style="left:8.799999999999997px;top:135.5px;" width="13" height="13.5" viewBox="0 0 13 13.5"><path d="M0 5.200h5M0 9h5M0 12.700h13" stroke="#6e6e6e" stroke-width="1.500"/><path d="M9.300 0v8M6.300 5.200l3 3.300 3-3.300" stroke="#6e6e6e" stroke-width="1.500" fill="none"/></svg>
<svg style="left:10.299999999999997px;top:166px;" width="10" height="13" viewBox="0 0 10 13"><path d="M5 13v-11.500M1 5.500l4-4.300 4 4.300" stroke="#b8b8b8" stroke-width="1.400" fill="none"/></svg>
<svg style="left:10.299999999999997px;top:194px;" width="10" height="13" viewBox="0 0 10 13"><path d="M5 0v11.500M1 7.500l4 4.300 4-4.300" stroke="#b8b8b8" stroke-width="1.400" fill="none"/></svg>
<svg style="left:8.799999999999997px;top:222px;" width="13" height="15" viewBox="0 0 13 15"><path d="M0 1h13M0 13.700h4.500" stroke="#6e6e6e" stroke-width="1.500"/><path d="M0 7h9.800a3.200 3.200 0 0 1 0 6.400h-2.500" stroke="#6e6e6e" stroke-width="1.500" fill="none"/><path d="M9.200 10.600l-2.800 2.800 2.800 2.700" stroke="#6e6e6e" stroke-width="1.400" fill="none" transform="translate(0,-1.200)"/></svg>
<svg style="left:8.299999999999997px;top:250.5px;" width="14" height="14.5" viewBox="0 0 14 14.5"><path d="M3 0h8v3.500h-8zM0 4.500h14v6h-2.500v-2.500h-9v2.500h-2.500zM3.500 9.500h7v4.500h-7z" fill="#6e6e6e"/><rect x="4.700" y="10.700" width="4.600" height="2.100" fill="#f3f3f3"/></svg>
<div style="left:6.699999999999999px;top:275.20000000000005px;width:17.3px;height:1px;background:#d0d0d0;"></div>
<svg style="left:11.5px;top:292.79999999999995px;" width="8" height="8" viewBox="0 0 8 8"><path d="M.7 1l3 3-3 3M4.300 1l3 3-3 3" stroke="#8a8a8a" stroke-width="1" fill="none"/></svg>
<div style="left:30px;top:99px;width:1398px;height:208px;background:#ffffff;overflow:hidden;">
<div style="left:864px;top:27.299999999999955px;width:534px;height:25.5px;background:#a6d2ff;"></div>
<span class="t m" style="left:14px;top:4.20px;font-size:16.667px;color:#0a0a0a;">2021-06-13 16:22:48.975 741-741/com.bradchao.mynotificationtest V/bradlog: get token:eXvDbVWJT6e7Wjdg9n5hrp:APA91bHggTZmRJgYTdKE26JvwdrtZylQx8</span>
<span class="t m" style="left:14px;top:30.85px;font-size:16.667px;color:#0a0a0a;">2021-06-13 16:23:45.479 993-993/com.bradchao.mynotificationtest V/bradlog: get token:eXvDbVWJT6e7Wjdg9n5hrp:APA91bHggTZmRJgYTdKE26JvwdrtZylQx8</span>
<span class="t m" style="left:14px;top:57.50px;font-size:16.667px;color:#0a0a0a;">2021-06-13 16:24:27.095 993-1224/com.bradchao.mynotificationtest V/bradlog: receive message</span>
<span class="t m" style="left:14px;top:84.15px;font-size:16.667px;color:#0a0a0a;">2021-06-13 16:24:41.295 993-1232/com.bradchao.mynotificationtest V/bradlog: receive message</span>
<span class="t m" style="left:14px;top:110.80px;font-size:16.667px;color:#0a0a0a;">2021-06-13 16:25:18.505 993-993/com.bradchao.mynotificationtest V/bradlog: get token:eXvDbVWJT6e7Wjdg9n5hrp:APA91bHggTZmRJgYTdKE26JvwdrtZylQx8</span>
<div style="left:0px;top:193px;width:1398px;height:15px;background:#f7f7f7;"></div>
<div style="left:16.299999999999997px;top:195.29999999999995px;width:767px;height:9px;background:#c7c7c7;border-radius:4.500px;"></div>
</div>
</div>
<div style="left:1904px;top:130.5px;width:30px;height:354px;background:#fbfbfb;overflow:hidden;border-left:1.500px solid #cfcfcf;box-shadow:0 0 3px rgba(0,0,0,.3);">
<div style="left:5px;top:13.5px;width:24px;height:22px;background:#3d9bef;border-radius:50%;"></div>
<svg style="left:8px;top:51.5px;" width="10" height="18" viewBox="0 0 10 18"><path d="M8 1.500h-5.500v5.500M2.500 16.500h5.500M2.800 12.200l5-5" stroke="#2e2e2e" stroke-width="1.600" fill="none"/></svg>
<svg style="left:8px;top:102.5px;" width="10" height="20" viewBox="0 0 10 20"><path d="M8 2h-3.500a2 2 0 0 0-2 2v12a2 2 0 0 0 2 2h3.500" stroke="#2e2e2e" stroke-width="1.600" fill="none"/></svg>
<svg style="left:8px;top:143.5px;" width="10" height="24" viewBox="0 0 10 24"><path d="M8 4h-2.500a2.500 2.500 0 0 0 0 5h2.500M8 9h-3.500a2 2 0 0 0-2 2v9h5.500" stroke="#2e2e2e" stroke-width="1.600" fill="none"/></svg>
<svg style="left:8px;top:195.5px;" width="10" height="20" viewBox="0 0 10 20"><path d="M8 6c-3.500 0-5.500 2.500-5.500 6.500h5.500z" fill="#2e2e2e"/></svg>
<svg style="left:8px;top:235.5px;" width="10" height="24" viewBox="0 0 10 24"><path d="M8 3v5M3 8h5M4 9l1.200 11h2.800" stroke="#2e2e2e" stroke-width="1.600" fill="none"/></svg>
<svg style="left:8px;top:273.5px;" width="10" height="26" viewBox="0 0 10 26"><path d="M8 3.500c-2.500 0-3 2.500-2 4.500-2.500.5-3.500 2.500-2 4.500-1.500 2-.5 4 2 4.500-1 2-.5 4 2 4.500" stroke="#2e2e2e" stroke-width="1.600" fill="none"/></svg>
<svg style="left:6px;top:316.5px;" width="12" height="26" viewBox="0 0 12 26"><circle cx="12.500" cy="12" r="9.500" stroke="#2e2e2e" stroke-width="1.600" fill="none"/></svg>
</div>
<div style="left:1495.5px;top:91.5px;width:407.5px;height:938.0px;background:#fdfdfd;border-radius:24px 24px 22px 22px;box-shadow:0 0 0 1px rgba(120,130,150,.35),0 5px 12px rgba(0,0,0,.55);"></div>
<div style="left:1495.5px;top:91.5px;width:407.5px;height:938.0px;background:#fdfdfd;overflow:hidden;border-radius:24px 24px 22px 22px;">
<div style="left:187.5px;top:16.5px;width:36px;height:6.5px;background:#2c2c2c;border-radius:3.250px;"></div>
<div style="left:0.0px;top:40.30000000000001px;width:407.5px;height:27px;background:#3710ae;"></div>
<div style="left:0.0px;top:67.0px;width:407.5px;height:56px;background:#591ce4;"></div>
<div style="left:0.0px;top:122.80000000000001px;width:407.5px;height:1.5px;background:linear-gradient(180deg,rgba(0,0,0,.12),rgba(0,0,0,0));"></div>
<span class="t s" style="left:28.5px;top:45.40px;font-size:13px;color:#fff;letter-spacing:-0.106px;-webkit-text-stroke:.4px #fff;">16:28</span>
<svg style="left:71.5px;top:48.400000000000006px;" width="14" height="14" viewBox="0 0 14 14"><circle cx="7" cy="7" r="6.500" fill="#fff"/><path d="M7 2.200a4.800 4.800 0 0 0 0 9.600z" fill="#3710ae"/><circle cx="9.300" cy="5.800" r="1.500" fill="#3710ae"/></svg>
<svg style="left:96.0px;top:48.400000000000006px;" width="10" height="14" viewBox="0 0 10 14"><path d="M5 .5a3.300 3.300 0 0 1 1.800 6l1.700 7h-7l1.700-7a3.300 3.300 0 0 1 1.800-6z" fill="#fff"/></svg>
<svg style="left:278.0px;top:48.900000000000006px;" width="15" height="12" viewBox="0 0 15 12"><path d="M1 3v-2.200h13v10.400h-6" stroke="#fff" stroke-width="1.200" fill="none"/><rect x="3.500" y="3" width="8.500" height="6" fill="#f08a6a"/><path d="M.8 5.300a6 6 0 0 1 6 6M.8 7.800a3.500 3.500 0 0 1 3.500 3.500" stroke="#fff" stroke-width="1.200" fill="none"/><circle cx="1.400" cy="10.700" r="1" fill="#fff"/></svg>
<svg style="left:296.0px;top:49.900000000000006px;" width="15.5" height="12" viewBox="0 0 15.5 12"><path d="M7.750 11.800l-7.600-8.600c4.200-4 11-4 15.200 0z" fill="#fff"/></svg>
<svg style="left:312.5px;top:49.400000000000006px;" width="13.5" height="12" viewBox="0 0 13.5 12"><path d="M13 0v12h-13z" fill="#fff"/></svg>
<svg style="left:331.79999999999995px;top:48.900000000000006px;" width="8.5" height="13" viewBox="0 0 8.5 13"><path d="M2.700 0h3v1.500h2.200v11.500h-7.400v-11.500h2.200z" fill="#fff"/><path d="M4.800 3.500l-2.200 4h1.500v3l2.300-4.200h-1.600z" fill="#3710ae"/></svg>
<span class="t s" style="left:344.5px;top:45.40px;font-size:13px;color:#fff;letter-spacing:0.238px;-webkit-text-stroke:.4px #fff;">100%</span>
<span class="t s" style="left:16.5px;top:86.30px;font-size:20.3px;color:#fff;letter-spacing:0.433px;-webkit-text-stroke:.55px #fff;">MyNotificationTest</span>
<span class="t s" style="left:166.20000000000005px;top:478.20px;font-size:13.8px;color:#7a7a7a;letter-spacing:-0.050px;">Hello World!</span>
<div style="left:0.0px;top:851.0px;width:407.5px;height:47.2px;background:#000;"></div>
<svg style="left:90.0px;top:866.5px;" width="15" height="16.5" viewBox="0 0 15 16.5"><path d="M14.500 .3v15.700l-14-7.850z" fill="#9a9a9a"/></svg>
<svg style="left:194.0px;top:865.0px;" width="19" height="19" viewBox="0 0 19 19"><circle cx="9.500" cy="9.500" r="8.600" fill="none" stroke="#9a9a9a" stroke-width="1.200"/><circle cx="9.500" cy="9.500" r="6.300" fill="#9a9a9a"/></svg>
<div style="left:301.79999999999995px;top:867.2px;width:14.7px;height:14.6px;background:#9a9a9a;border-radius:1px;"></div>
<svg style="left:52.0px;top:910.0px;" width="26" height="16" viewBox="0 0 26 16"><path d="M6.500 1.200l-5.300 4.500 5.300 4.500M1.500 5.700h18a4.200 4.200 0 0 1 0 8.400h-8.500" stroke="#8b8b8b" stroke-width="1.500" fill="none"/></svg>
<svg style="left:194.0px;top:910.0px;" width="24" height="16" viewBox="0 0 24 16"><path d="M1 14.500v-6.500l10.500-6.800 10.500 6.800v6.500z" stroke="#8b8b8b" stroke-width="1.600" fill="none"/></svg>
<svg style="left:332.5px;top:911.0px;" width="22.5" height="14" viewBox="0 0 22.5 14"><path d="M0 1.200h22M0 6.800h22M0 12.300h22" stroke="#8b8b8b" stroke-width="1.500"/></svg>
</div>
<svg style="left:145px;top:556px;" width="68" height="68" viewBox="0 0 68 68"><circle cx="34" cy="33.500" r="28.300" fill="none" stroke="#f1f130" stroke-width="2.800"/><path d="M32.800 31.200v12.200l2.800-2.600 2.100 4.800 1.900-.8-2.100-4.700h3.800z" fill="#111" stroke="#fff" stroke-width=".8"/></svg>
</div>
</body></html>
